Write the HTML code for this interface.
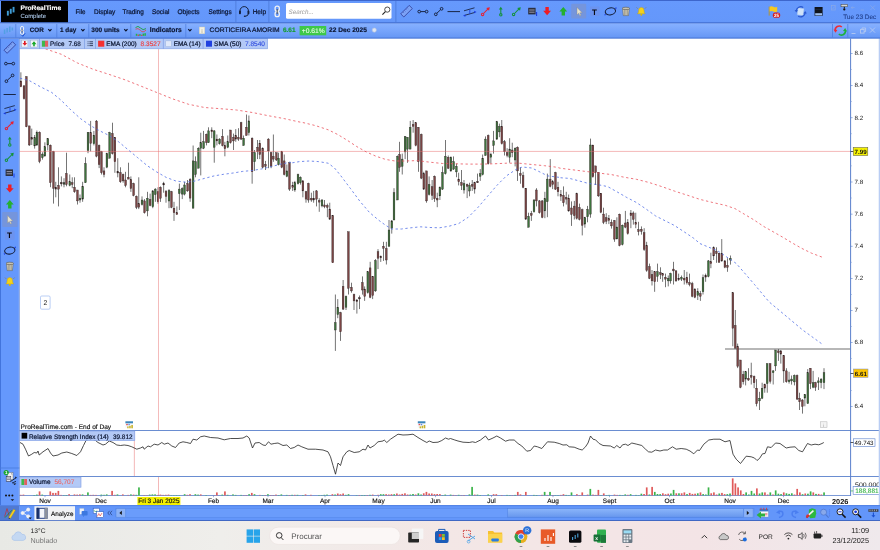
<!DOCTYPE html>
<html lang="en"><head><meta charset="utf-8"><title>ProRealTime - CORTICEIRA AMORIM</title>
<style>
html,body{margin:0;padding:0;background:#fff;overflow:hidden}
svg{display:block;will-change:transform}
text{font-family:"Liberation Sans",sans-serif;text-rendering:geometricPrecision;}
.b{font-weight:bold}
</style></head><body>
<svg width="880" height="550" viewBox="0 0 880 550">
<rect x="0" y="0" width="880" height="550" fill="#fff"/>
<rect x="725" y="348.5" width="125.5" height="1.0" fill="#707070"/>
<rect x="20.56" y="72.3" width="0.7" height="14.9" fill="#3a3a3a"/>
<rect x="20.03" y="81.0" width="1.76" height="5.8" fill="#7b4545" stroke="#2a2020" stroke-width="0.36"/>
<rect x="23.65" y="85.0" width="0.7" height="14.5" fill="#3a3a3a"/>
<rect x="23.12" y="85.9" width="1.76" height="12.7" fill="#7b4545" stroke="#2a2020" stroke-width="0.36"/>
<rect x="26.01" y="76.3" width="0.7" height="50.9" fill="#3a3a3a"/>
<rect x="25.48" y="76.8" width="1.76" height="50.0" fill="#7b4545" stroke="#2a2020" stroke-width="0.36"/>
<rect x="28.92" y="125.9" width="0.7" height="20.0" fill="#3a3a3a"/>
<rect x="28.39" y="125.9" width="1.76" height="19.1" fill="#7b4545" stroke="#2a2020" stroke-width="0.36"/>
<rect x="31.47" y="128.6" width="0.7" height="16.4" fill="#3a3a3a"/>
<rect x="30.94" y="137.7" width="1.76" height="1.5" fill="#4a2c2c" stroke="#2a2020" stroke-width="0.36"/>
<rect x="34.38" y="135.0" width="0.7" height="13.6" fill="#3a3a3a"/>
<rect x="33.85" y="137.7" width="1.76" height="8.2" fill="#3d733d" stroke="#2a2020" stroke-width="0.36"/>
<rect x="36.56" y="130.5" width="0.7" height="15.5" fill="#3a3a3a"/>
<rect x="36.03" y="132.3" width="1.76" height="12.7" fill="#3d733d" stroke="#2a2020" stroke-width="0.36"/>
<rect x="39.29" y="131.4" width="0.7" height="31.8" fill="#3a3a3a"/>
<rect x="38.76" y="132.3" width="1.76" height="29.1" fill="#7b4545" stroke="#2a2020" stroke-width="0.36"/>
<rect x="42.01" y="152.3" width="0.7" height="7.3" fill="#3a3a3a"/>
<rect x="41.48" y="154.1" width="1.76" height="3.6" fill="#3d733d" stroke="#2a2020" stroke-width="0.36"/>
<rect x="44.56" y="142.3" width="0.7" height="14.5" fill="#3a3a3a"/>
<rect x="44.03" y="146.8" width="1.76" height="9.1" fill="#3d733d" stroke="#2a2020" stroke-width="0.36"/>
<rect x="47.47" y="138.6" width="0.7" height="11.8" fill="#3a3a3a"/>
<rect x="46.94" y="138.6" width="1.76" height="6.4" fill="#3d733d" stroke="#2a2020" stroke-width="0.36"/>
<rect x="50.01" y="144.5" width="0.7" height="42.7" fill="#3a3a3a"/>
<rect x="49.48" y="145.2" width="1.76" height="37.5" fill="#7b4545" stroke="#2a2020" stroke-width="0.36"/>
<rect x="53.10" y="150.9" width="0.7" height="52.7" fill="#3a3a3a"/>
<rect x="52.57" y="151.6" width="1.76" height="36.6" fill="#7b4545" stroke="#2a2020" stroke-width="0.36"/>
<rect x="55.47" y="181.8" width="0.7" height="15.5" fill="#3a3a3a"/>
<rect x="54.94" y="187.3" width="1.76" height="1.8" fill="#7b4545" stroke="#2a2020" stroke-width="0.36"/>
<rect x="58.20" y="167.3" width="0.7" height="39.1" fill="#3a3a3a"/>
<rect x="57.67" y="185.5" width="1.76" height="3.6" fill="#7b4545" stroke="#2a2020" stroke-width="0.36"/>
<rect x="60.92" y="176.4" width="0.7" height="10.0" fill="#3a3a3a"/>
<rect x="60.39" y="182.4" width="1.76" height="1.5" fill="#4a2c2c" stroke="#2a2020" stroke-width="0.36"/>
<rect x="63.65" y="178.2" width="0.7" height="9.1" fill="#3a3a3a"/>
<rect x="63.12" y="182.7" width="1.76" height="1.5" fill="#2c4a2c" stroke="#2a2020" stroke-width="0.36"/>
<rect x="66.01" y="152.7" width="0.7" height="33.6" fill="#3a3a3a"/>
<rect x="65.48" y="173.6" width="1.76" height="10.9" fill="#7b4545" stroke="#2a2020" stroke-width="0.36"/>
<rect x="69.47" y="174.5" width="0.7" height="11.8" fill="#3a3a3a"/>
<rect x="68.94" y="181.8" width="1.76" height="3.6" fill="#3d733d" stroke="#2a2020" stroke-width="0.36"/>
<rect x="71.83" y="177.3" width="0.7" height="10.9" fill="#3a3a3a"/>
<rect x="71.30" y="182.7" width="1.76" height="1.8" fill="#7b4545" stroke="#2a2020" stroke-width="0.36"/>
<rect x="74.20" y="177.3" width="0.7" height="15.5" fill="#3a3a3a"/>
<rect x="73.67" y="187.3" width="1.76" height="4.5" fill="#7b4545" stroke="#2a2020" stroke-width="0.36"/>
<rect x="77.10" y="190.0" width="0.7" height="14.5" fill="#3a3a3a"/>
<rect x="76.57" y="190.0" width="1.76" height="10.9" fill="#7b4545" stroke="#2a2020" stroke-width="0.36"/>
<rect x="79.65" y="194.5" width="0.7" height="8.2" fill="#3a3a3a"/>
<rect x="79.12" y="198.2" width="1.76" height="1.8" fill="#3d733d" stroke="#2a2020" stroke-width="0.36"/>
<rect x="82.38" y="181.8" width="0.7" height="20.0" fill="#3a3a3a"/>
<rect x="81.85" y="186.4" width="1.76" height="12.7" fill="#3d733d" stroke="#2a2020" stroke-width="0.36"/>
<rect x="85.10" y="157.3" width="0.7" height="25.5" fill="#3a3a3a"/>
<rect x="84.57" y="163.6" width="1.76" height="19.1" fill="#3d733d" stroke="#2a2020" stroke-width="0.36"/>
<rect x="87.65" y="132.3" width="0.7" height="20.9" fill="#3a3a3a"/>
<rect x="87.12" y="132.3" width="1.76" height="18.2" fill="#3d733d" stroke="#2a2020" stroke-width="0.36"/>
<rect x="90.38" y="120.9" width="0.7" height="30.5" fill="#3a3a3a"/>
<rect x="89.85" y="132.5" width="1.76" height="10.9" fill="#7b4545" stroke="#2a2020" stroke-width="0.36"/>
<rect x="93.56" y="130.9" width="0.7" height="14.5" fill="#3a3a3a"/>
<rect x="93.03" y="135.2" width="1.76" height="8.6" fill="#3d733d" stroke="#2a2020" stroke-width="0.36"/>
<rect x="96.20" y="120.0" width="0.7" height="37.3" fill="#3a3a3a"/>
<rect x="95.67" y="121.1" width="1.76" height="35.0" fill="#7b4545" stroke="#2a2020" stroke-width="0.36"/>
<rect x="98.74" y="144.5" width="0.7" height="23.6" fill="#3a3a3a"/>
<rect x="98.21" y="145.5" width="1.76" height="19.1" fill="#7b4545" stroke="#2a2020" stroke-width="0.36"/>
<rect x="101.10" y="150.9" width="0.7" height="23.6" fill="#3a3a3a"/>
<rect x="100.57" y="151.8" width="1.76" height="20.9" fill="#7b4545" stroke="#2a2020" stroke-width="0.36"/>
<rect x="103.65" y="167.3" width="0.7" height="10.0" fill="#3a3a3a"/>
<rect x="103.12" y="170.9" width="1.76" height="3.6" fill="#7b4545" stroke="#2a2020" stroke-width="0.36"/>
<rect x="106.56" y="152.7" width="0.7" height="15.5" fill="#3a3a3a"/>
<rect x="106.03" y="153.6" width="1.76" height="13.6" fill="#3d733d" stroke="#2a2020" stroke-width="0.36"/>
<rect x="109.29" y="131.8" width="0.7" height="26.4" fill="#3a3a3a"/>
<rect x="108.76" y="132.7" width="1.76" height="25.5" fill="#3d733d" stroke="#2a2020" stroke-width="0.36"/>
<rect x="112.01" y="122.7" width="0.7" height="31.8" fill="#3a3a3a"/>
<rect x="111.48" y="133.6" width="1.76" height="20.0" fill="#7b4545" stroke="#2a2020" stroke-width="0.36"/>
<rect x="114.56" y="137.3" width="0.7" height="35.5" fill="#3a3a3a"/>
<rect x="114.03" y="137.3" width="1.76" height="24.5" fill="#7b4545" stroke="#2a2020" stroke-width="0.36"/>
<rect x="117.47" y="158.2" width="0.7" height="19.1" fill="#3a3a3a"/>
<rect x="116.94" y="171.5" width="1.76" height="1.5" fill="#4a2c2c" stroke="#2a2020" stroke-width="0.36"/>
<rect x="120.01" y="167.3" width="0.7" height="15.5" fill="#3a3a3a"/>
<rect x="119.48" y="172.7" width="1.76" height="9.1" fill="#7b4545" stroke="#2a2020" stroke-width="0.36"/>
<rect x="122.74" y="173.6" width="0.7" height="9.1" fill="#3a3a3a"/>
<rect x="122.21" y="174.5" width="1.76" height="6.4" fill="#7b4545" stroke="#2a2020" stroke-width="0.36"/>
<rect x="125.29" y="171.8" width="0.7" height="15.5" fill="#3a3a3a"/>
<rect x="124.76" y="180.0" width="1.76" height="5.5" fill="#7b4545" stroke="#2a2020" stroke-width="0.36"/>
<rect x="128.01" y="162.7" width="0.7" height="16.4" fill="#3a3a3a"/>
<rect x="127.48" y="177.3" width="1.76" height="1.8" fill="#7b4545" stroke="#2a2020" stroke-width="0.36"/>
<rect x="130.56" y="176.4" width="0.7" height="15.5" fill="#3a3a3a"/>
<rect x="130.03" y="179.5" width="1.76" height="9.1" fill="#7b4545" stroke="#2a2020" stroke-width="0.36"/>
<rect x="133.29" y="182.7" width="0.7" height="13.6" fill="#3a3a3a"/>
<rect x="132.76" y="183.6" width="1.76" height="11.8" fill="#7b4545" stroke="#2a2020" stroke-width="0.36"/>
<rect x="136.10" y="195.5" width="0.7" height="13.6" fill="#3a3a3a"/>
<rect x="135.57" y="196.4" width="1.76" height="10.9" fill="#7b4545" stroke="#2a2020" stroke-width="0.36"/>
<rect x="138.47" y="177.3" width="0.7" height="31.8" fill="#3a3a3a"/>
<rect x="137.94" y="203.6" width="1.76" height="3.6" fill="#7b4545" stroke="#2a2020" stroke-width="0.36"/>
<rect x="141.65" y="196.4" width="0.7" height="9.1" fill="#3a3a3a"/>
<rect x="141.12" y="200.0" width="1.76" height="4.5" fill="#3d733d" stroke="#2a2020" stroke-width="0.36"/>
<rect x="144.20" y="199.1" width="0.7" height="14.5" fill="#3a3a3a"/>
<rect x="143.67" y="200.9" width="1.76" height="11.8" fill="#7b4545" stroke="#2a2020" stroke-width="0.36"/>
<rect x="147.01" y="191.8" width="0.7" height="24.5" fill="#3a3a3a"/>
<rect x="146.48" y="198.2" width="1.76" height="12.7" fill="#3d733d" stroke="#2a2020" stroke-width="0.36"/>
<rect x="149.74" y="193.6" width="0.7" height="12.7" fill="#3a3a3a"/>
<rect x="149.21" y="199.4" width="1.76" height="6.1" fill="#7b4545" stroke="#2a2020" stroke-width="0.36"/>
<rect x="152.47" y="190.0" width="0.7" height="18.2" fill="#3a3a3a"/>
<rect x="151.94" y="190.9" width="1.76" height="15.9" fill="#3d733d" stroke="#2a2020" stroke-width="0.36"/>
<rect x="154.92" y="188.2" width="0.7" height="13.6" fill="#3a3a3a"/>
<rect x="154.39" y="189.1" width="1.76" height="5.5" fill="#3d733d" stroke="#2a2020" stroke-width="0.36"/>
<rect x="157.65" y="187.3" width="0.7" height="16.4" fill="#3a3a3a"/>
<rect x="157.12" y="191.8" width="1.76" height="10.0" fill="#7b4545" stroke="#2a2020" stroke-width="0.36"/>
<rect x="160.10" y="186.4" width="0.7" height="15.5" fill="#3a3a3a"/>
<rect x="159.57" y="187.3" width="1.76" height="10.9" fill="#7b4545" stroke="#2a2020" stroke-width="0.36"/>
<rect x="163.38" y="181.8" width="0.7" height="10.9" fill="#3a3a3a"/>
<rect x="162.85" y="183.6" width="1.76" height="1.3" fill="#4a2c2c" stroke="#2a2020" stroke-width="0.36"/>
<rect x="165.65" y="190.0" width="0.7" height="12.7" fill="#3a3a3a"/>
<rect x="165.12" y="191.4" width="1.76" height="5.0" fill="#7b4545" stroke="#2a2020" stroke-width="0.36"/>
<rect x="168.65" y="189.1" width="0.7" height="19.1" fill="#3a3a3a"/>
<rect x="168.12" y="190.5" width="1.76" height="10.5" fill="#3d733d" stroke="#2a2020" stroke-width="0.36"/>
<rect x="171.10" y="190.9" width="0.7" height="17.3" fill="#3a3a3a"/>
<rect x="170.57" y="191.8" width="1.76" height="15.5" fill="#7b4545" stroke="#2a2020" stroke-width="0.36"/>
<rect x="173.65" y="201.8" width="0.7" height="19.1" fill="#3a3a3a"/>
<rect x="173.12" y="208.2" width="1.76" height="4.5" fill="#7b4545" stroke="#2a2020" stroke-width="0.36"/>
<rect x="176.56" y="206.4" width="0.7" height="8.2" fill="#3a3a3a"/>
<rect x="176.03" y="212.7" width="1.76" height="1.8" fill="#7b4545" stroke="#2a2020" stroke-width="0.36"/>
<rect x="178.92" y="183.6" width="0.7" height="26.4" fill="#3a3a3a"/>
<rect x="178.39" y="189.1" width="1.76" height="4.5" fill="#3d733d" stroke="#2a2020" stroke-width="0.36"/>
<rect x="181.83" y="187.3" width="0.7" height="11.8" fill="#3a3a3a"/>
<rect x="181.30" y="188.6" width="1.76" height="5.5" fill="#3d733d" stroke="#2a2020" stroke-width="0.36"/>
<rect x="184.20" y="181.8" width="0.7" height="13.6" fill="#3a3a3a"/>
<rect x="183.67" y="185.0" width="1.76" height="9.1" fill="#3d733d" stroke="#2a2020" stroke-width="0.36"/>
<rect x="187.29" y="180.0" width="0.7" height="11.8" fill="#3a3a3a"/>
<rect x="186.76" y="183.6" width="1.76" height="7.3" fill="#7b4545" stroke="#2a2020" stroke-width="0.36"/>
<rect x="189.74" y="178.2" width="0.7" height="23.6" fill="#3a3a3a"/>
<rect x="189.21" y="179.5" width="1.76" height="18.6" fill="#7b4545" stroke="#2a2020" stroke-width="0.36"/>
<rect x="192.74" y="145.5" width="0.7" height="62.7" fill="#3a3a3a"/>
<rect x="192.21" y="160.9" width="1.76" height="47.3" fill="#3d733d" stroke="#2a2020" stroke-width="0.36"/>
<rect x="195.20" y="156.4" width="0.7" height="20.9" fill="#3a3a3a"/>
<rect x="194.67" y="161.8" width="1.76" height="12.7" fill="#3d733d" stroke="#2a2020" stroke-width="0.36"/>
<rect x="198.10" y="147.3" width="0.7" height="20.9" fill="#3a3a3a"/>
<rect x="197.57" y="148.2" width="1.76" height="20.0" fill="#3d733d" stroke="#2a2020" stroke-width="0.36"/>
<rect x="200.47" y="132.7" width="0.7" height="42.7" fill="#3a3a3a"/>
<rect x="199.94" y="142.7" width="1.76" height="5.5" fill="#3d733d" stroke="#2a2020" stroke-width="0.36"/>
<rect x="203.29" y="130.9" width="0.7" height="18.2" fill="#3a3a3a"/>
<rect x="202.76" y="141.8" width="1.76" height="6.4" fill="#3d733d" stroke="#2a2020" stroke-width="0.36"/>
<rect x="206.01" y="133.6" width="0.7" height="11.8" fill="#3a3a3a"/>
<rect x="205.48" y="134.5" width="1.76" height="8.2" fill="#7b4545" stroke="#2a2020" stroke-width="0.36"/>
<rect x="208.20" y="127.3" width="0.7" height="15.5" fill="#3a3a3a"/>
<rect x="207.67" y="130.9" width="1.76" height="11.8" fill="#3d733d" stroke="#2a2020" stroke-width="0.36"/>
<rect x="211.47" y="127.3" width="0.7" height="10.9" fill="#3a3a3a"/>
<rect x="210.94" y="130.0" width="1.76" height="1.8" fill="#7b4545" stroke="#2a2020" stroke-width="0.36"/>
<rect x="213.83" y="130.0" width="0.7" height="32.7" fill="#3a3a3a"/>
<rect x="213.30" y="130.9" width="1.76" height="16.4" fill="#3d733d" stroke="#2a2020" stroke-width="0.36"/>
<rect x="216.56" y="134.5" width="0.7" height="10.9" fill="#3a3a3a"/>
<rect x="216.03" y="139.1" width="1.76" height="1.8" fill="#7b4545" stroke="#2a2020" stroke-width="0.36"/>
<rect x="219.29" y="138.2" width="0.7" height="6.4" fill="#3a3a3a"/>
<rect x="218.76" y="139.1" width="1.76" height="4.5" fill="#3d733d" stroke="#2a2020" stroke-width="0.36"/>
<rect x="222.20" y="129.1" width="0.7" height="17.3" fill="#3a3a3a"/>
<rect x="221.67" y="136.4" width="1.76" height="9.1" fill="#7b4545" stroke="#2a2020" stroke-width="0.36"/>
<rect x="224.56" y="141.8" width="0.7" height="14.5" fill="#3a3a3a"/>
<rect x="224.03" y="145.5" width="1.76" height="3.3" fill="#7b4545" stroke="#2a2020" stroke-width="0.36"/>
<rect x="227.47" y="135.5" width="0.7" height="12.7" fill="#3a3a3a"/>
<rect x="226.94" y="141.8" width="1.76" height="5.5" fill="#3d733d" stroke="#2a2020" stroke-width="0.36"/>
<rect x="230.20" y="130.0" width="0.7" height="13.6" fill="#3a3a3a"/>
<rect x="229.67" y="130.0" width="1.76" height="12.7" fill="#7b4545" stroke="#2a2020" stroke-width="0.36"/>
<rect x="233.10" y="133.6" width="0.7" height="16.4" fill="#3a3a3a"/>
<rect x="232.57" y="137.3" width="1.76" height="3.6" fill="#7b4545" stroke="#2a2020" stroke-width="0.36"/>
<rect x="235.47" y="129.1" width="0.7" height="12.7" fill="#3a3a3a"/>
<rect x="234.94" y="135.5" width="1.76" height="3.6" fill="#7b4545" stroke="#2a2020" stroke-width="0.36"/>
<rect x="238.01" y="128.2" width="0.7" height="12.7" fill="#3a3a3a"/>
<rect x="237.48" y="137.3" width="1.76" height="1.8" fill="#7b4545" stroke="#2a2020" stroke-width="0.36"/>
<rect x="240.74" y="121.8" width="0.7" height="18.2" fill="#3a3a3a"/>
<rect x="240.21" y="122.7" width="1.76" height="16.4" fill="#7b4545" stroke="#2a2020" stroke-width="0.36"/>
<rect x="243.29" y="135.5" width="0.7" height="10.0" fill="#3a3a3a"/>
<rect x="242.76" y="138.2" width="1.76" height="7.3" fill="#3d733d" stroke="#2a2020" stroke-width="0.36"/>
<rect x="246.01" y="114.5" width="0.7" height="20.9" fill="#3a3a3a"/>
<rect x="245.48" y="127.3" width="1.76" height="8.2" fill="#7b4545" stroke="#2a2020" stroke-width="0.36"/>
<rect x="248.56" y="115.5" width="0.7" height="20.0" fill="#3a3a3a"/>
<rect x="248.03" y="120.9" width="1.76" height="11.8" fill="#3d733d" stroke="#2a2020" stroke-width="0.36"/>
<rect x="251.74" y="137.3" width="0.7" height="46.4" fill="#3a3a3a"/>
<rect x="251.21" y="138.2" width="1.76" height="33.6" fill="#7b4545" stroke="#2a2020" stroke-width="0.36"/>
<rect x="254.29" y="150.0" width="0.7" height="20.9" fill="#3a3a3a"/>
<rect x="253.76" y="152.7" width="1.76" height="9.1" fill="#3d733d" stroke="#2a2020" stroke-width="0.36"/>
<rect x="257.20" y="140.0" width="0.7" height="19.1" fill="#3a3a3a"/>
<rect x="256.67" y="147.3" width="1.76" height="4.5" fill="#7b4545" stroke="#2a2020" stroke-width="0.36"/>
<rect x="259.47" y="140.0" width="0.7" height="19.1" fill="#3a3a3a"/>
<rect x="258.94" y="143.2" width="1.76" height="11.4" fill="#7b4545" stroke="#2a2020" stroke-width="0.36"/>
<rect x="262.38" y="147.3" width="0.7" height="20.9" fill="#3a3a3a"/>
<rect x="261.85" y="148.2" width="1.76" height="19.1" fill="#7b4545" stroke="#2a2020" stroke-width="0.36"/>
<rect x="265.10" y="160.9" width="0.7" height="9.1" fill="#3a3a3a"/>
<rect x="264.57" y="164.5" width="1.76" height="1.8" fill="#7b4545" stroke="#2a2020" stroke-width="0.36"/>
<rect x="268.01" y="138.2" width="0.7" height="30.0" fill="#3a3a3a"/>
<rect x="267.48" y="139.1" width="1.76" height="11.8" fill="#7b4545" stroke="#2a2020" stroke-width="0.36"/>
<rect x="270.74" y="151.8" width="0.7" height="16.4" fill="#3a3a3a"/>
<rect x="270.21" y="152.7" width="1.76" height="13.6" fill="#7b4545" stroke="#2a2020" stroke-width="0.36"/>
<rect x="272.92" y="134.5" width="0.7" height="27.3" fill="#3a3a3a"/>
<rect x="272.39" y="156.4" width="1.76" height="2.7" fill="#7b4545" stroke="#2a2020" stroke-width="0.36"/>
<rect x="276.01" y="152.7" width="0.7" height="8.2" fill="#3a3a3a"/>
<rect x="275.48" y="152.7" width="1.76" height="7.3" fill="#7b4545" stroke="#2a2020" stroke-width="0.36"/>
<rect x="278.20" y="152.7" width="0.7" height="12.7" fill="#3a3a3a"/>
<rect x="277.67" y="158.2" width="1.76" height="6.4" fill="#3d733d" stroke="#2a2020" stroke-width="0.36"/>
<rect x="281.47" y="150.9" width="0.7" height="17.3" fill="#3a3a3a"/>
<rect x="280.94" y="151.8" width="1.76" height="15.5" fill="#7b4545" stroke="#2a2020" stroke-width="0.36"/>
<rect x="283.83" y="154.5" width="0.7" height="20.9" fill="#3a3a3a"/>
<rect x="283.30" y="160.9" width="1.76" height="13.6" fill="#7b4545" stroke="#2a2020" stroke-width="0.36"/>
<rect x="286.56" y="164.5" width="0.7" height="12.7" fill="#3a3a3a"/>
<rect x="286.03" y="170.9" width="1.76" height="5.5" fill="#3d733d" stroke="#2a2020" stroke-width="0.36"/>
<rect x="289.10" y="161.8" width="0.7" height="29.1" fill="#3a3a3a"/>
<rect x="288.57" y="162.7" width="1.76" height="26.4" fill="#7b4545" stroke="#2a2020" stroke-width="0.36"/>
<rect x="292.38" y="181.8" width="0.7" height="9.1" fill="#3a3a3a"/>
<rect x="291.85" y="185.5" width="1.76" height="1.8" fill="#7b4545" stroke="#2a2020" stroke-width="0.36"/>
<rect x="294.56" y="180.9" width="0.7" height="10.9" fill="#3a3a3a"/>
<rect x="294.03" y="182.7" width="1.76" height="7.3" fill="#3d733d" stroke="#2a2020" stroke-width="0.36"/>
<rect x="297.65" y="173.6" width="0.7" height="10.9" fill="#3a3a3a"/>
<rect x="297.12" y="174.5" width="1.76" height="9.1" fill="#3d733d" stroke="#2a2020" stroke-width="0.36"/>
<rect x="300.01" y="176.4" width="0.7" height="8.2" fill="#3a3a3a"/>
<rect x="299.48" y="177.3" width="1.76" height="5.5" fill="#3d733d" stroke="#2a2020" stroke-width="0.36"/>
<rect x="302.56" y="180.0" width="0.7" height="17.3" fill="#3a3a3a"/>
<rect x="302.03" y="180.9" width="1.76" height="10.0" fill="#7b4545" stroke="#2a2020" stroke-width="0.36"/>
<rect x="305.65" y="190.9" width="0.7" height="11.8" fill="#3a3a3a"/>
<rect x="305.12" y="191.8" width="1.76" height="7.3" fill="#7b4545" stroke="#2a2020" stroke-width="0.36"/>
<rect x="308.01" y="182.7" width="0.7" height="20.0" fill="#3a3a3a"/>
<rect x="307.48" y="183.6" width="1.76" height="16.4" fill="#7b4545" stroke="#2a2020" stroke-width="0.36"/>
<rect x="310.92" y="192.7" width="0.7" height="9.1" fill="#3a3a3a"/>
<rect x="310.39" y="198.2" width="1.76" height="1.8" fill="#7b4545" stroke="#2a2020" stroke-width="0.36"/>
<rect x="313.38" y="190.9" width="0.7" height="11.8" fill="#3a3a3a"/>
<rect x="312.85" y="198.2" width="1.76" height="1.8" fill="#7b4545" stroke="#2a2020" stroke-width="0.36"/>
<rect x="316.20" y="190.0" width="0.7" height="16.4" fill="#3a3a3a"/>
<rect x="315.67" y="190.9" width="1.76" height="8.2" fill="#7b4545" stroke="#2a2020" stroke-width="0.36"/>
<rect x="318.83" y="198.2" width="0.7" height="13.6" fill="#3a3a3a"/>
<rect x="318.30" y="200.5" width="1.76" height="1.6" fill="#7b4545" stroke="#2a2020" stroke-width="0.36"/>
<rect x="321.65" y="199.1" width="0.7" height="8.2" fill="#3a3a3a"/>
<rect x="321.12" y="200.0" width="1.76" height="5.9" fill="#3d733d" stroke="#2a2020" stroke-width="0.36"/>
<rect x="324.20" y="200.0" width="0.7" height="8.2" fill="#3a3a3a"/>
<rect x="323.67" y="205.0" width="1.76" height="1.8" fill="#7b4545" stroke="#2a2020" stroke-width="0.36"/>
<rect x="326.92" y="203.6" width="0.7" height="13.6" fill="#3a3a3a"/>
<rect x="326.39" y="205.5" width="1.76" height="1.8" fill="#7b4545" stroke="#2a2020" stroke-width="0.36"/>
<rect x="329.47" y="202.7" width="0.7" height="17.3" fill="#3a3a3a"/>
<rect x="328.94" y="209.1" width="1.76" height="10.0" fill="#7b4545" stroke="#2a2020" stroke-width="0.36"/>
<rect x="332.38" y="215.5" width="0.7" height="47.3" fill="#3a3a3a"/>
<rect x="331.85" y="215.5" width="1.76" height="47.3" fill="#7b4545" stroke="#2a2020" stroke-width="0.36"/>
<rect x="334.92" y="294.5" width="0.7" height="56.4" fill="#3a3a3a"/>
<rect x="334.39" y="322.7" width="1.76" height="7.3" fill="#3d733d" stroke="#2a2020" stroke-width="0.36"/>
<rect x="337.47" y="299.1" width="0.7" height="19.1" fill="#3a3a3a"/>
<rect x="336.94" y="307.3" width="1.76" height="7.3" fill="#3d733d" stroke="#2a2020" stroke-width="0.36"/>
<rect x="340.20" y="311.8" width="0.7" height="29.1" fill="#3a3a3a"/>
<rect x="339.67" y="312.7" width="1.76" height="19.1" fill="#7b4545" stroke="#2a2020" stroke-width="0.36"/>
<rect x="342.74" y="280.0" width="0.7" height="30.0" fill="#3a3a3a"/>
<rect x="342.21" y="286.4" width="1.76" height="22.7" fill="#7b4545" stroke="#2a2020" stroke-width="0.36"/>
<rect x="345.65" y="295.5" width="0.7" height="14.5" fill="#3a3a3a"/>
<rect x="345.12" y="296.4" width="1.76" height="10.9" fill="#3d733d" stroke="#2a2020" stroke-width="0.36"/>
<rect x="348.01" y="231.8" width="0.7" height="62.7" fill="#3a3a3a"/>
<rect x="347.48" y="231.8" width="1.76" height="56.4" fill="#7b4545" stroke="#2a2020" stroke-width="0.36"/>
<rect x="351.10" y="282.7" width="0.7" height="10.0" fill="#3a3a3a"/>
<rect x="350.57" y="287.3" width="1.76" height="3.6" fill="#7b4545" stroke="#2a2020" stroke-width="0.36"/>
<rect x="353.65" y="293.6" width="0.7" height="16.4" fill="#3a3a3a"/>
<rect x="353.12" y="294.5" width="1.76" height="6.4" fill="#7b4545" stroke="#2a2020" stroke-width="0.36"/>
<rect x="356.56" y="299.1" width="0.7" height="14.5" fill="#3a3a3a"/>
<rect x="356.03" y="300.0" width="1.76" height="1.5" fill="#4a2c2c" stroke="#2a2020" stroke-width="0.36"/>
<rect x="359.10" y="295.5" width="0.7" height="13.6" fill="#3a3a3a"/>
<rect x="358.57" y="297.8" width="1.76" height="1.1" fill="#4a2c2c" stroke="#2a2020" stroke-width="0.36"/>
<rect x="362.01" y="276.4" width="0.7" height="18.2" fill="#3a3a3a"/>
<rect x="361.48" y="282.7" width="1.76" height="7.3" fill="#7b4545" stroke="#2a2020" stroke-width="0.36"/>
<rect x="364.38" y="286.4" width="0.7" height="14.5" fill="#3a3a3a"/>
<rect x="363.85" y="289.1" width="1.76" height="7.3" fill="#7b4545" stroke="#2a2020" stroke-width="0.36"/>
<rect x="367.47" y="271.8" width="0.7" height="21.8" fill="#3a3a3a"/>
<rect x="366.94" y="271.8" width="1.76" height="20.9" fill="#3d733d" stroke="#2a2020" stroke-width="0.36"/>
<rect x="369.77" y="261.8" width="0.7" height="36.4" fill="#3a3a3a"/>
<rect x="369.24" y="267.9" width="1.76" height="29.4" fill="#7b4545" stroke="#2a2020" stroke-width="0.36"/>
<rect x="372.38" y="276.4" width="0.7" height="22.7" fill="#3a3a3a"/>
<rect x="371.85" y="276.4" width="1.76" height="19.1" fill="#7b4545" stroke="#2a2020" stroke-width="0.36"/>
<rect x="375.10" y="259.1" width="0.7" height="32.7" fill="#3a3a3a"/>
<rect x="374.57" y="260.6" width="1.76" height="30.3" fill="#3d733d" stroke="#2a2020" stroke-width="0.36"/>
<rect x="377.65" y="249.1" width="0.7" height="20.0" fill="#3a3a3a"/>
<rect x="377.12" y="251.8" width="1.76" height="6.4" fill="#7b4545" stroke="#2a2020" stroke-width="0.36"/>
<rect x="380.47" y="255.5" width="0.7" height="6.4" fill="#3a3a3a"/>
<rect x="379.94" y="256.4" width="1.76" height="1.4" fill="#4a2c2c" stroke="#2a2020" stroke-width="0.36"/>
<rect x="383.10" y="241.8" width="0.7" height="19.1" fill="#3a3a3a"/>
<rect x="382.57" y="246.4" width="1.76" height="1.8" fill="#7b4545" stroke="#2a2020" stroke-width="0.36"/>
<rect x="385.92" y="241.8" width="0.7" height="22.7" fill="#3a3a3a"/>
<rect x="385.39" y="248.6" width="1.76" height="11.4" fill="#7b4545" stroke="#2a2020" stroke-width="0.36"/>
<rect x="388.65" y="220.0" width="0.7" height="26.4" fill="#3a3a3a"/>
<rect x="388.12" y="230.0" width="1.76" height="16.4" fill="#3d733d" stroke="#2a2020" stroke-width="0.36"/>
<rect x="391.47" y="220.0" width="0.7" height="13.6" fill="#3a3a3a"/>
<rect x="390.94" y="220.9" width="1.76" height="7.3" fill="#3d733d" stroke="#2a2020" stroke-width="0.36"/>
<rect x="393.65" y="188.2" width="0.7" height="31.8" fill="#3a3a3a"/>
<rect x="393.12" y="192.7" width="1.76" height="27.3" fill="#3d733d" stroke="#2a2020" stroke-width="0.36"/>
<rect x="397.10" y="155.5" width="0.7" height="44.5" fill="#3a3a3a"/>
<rect x="396.57" y="156.4" width="1.76" height="43.6" fill="#3d733d" stroke="#2a2020" stroke-width="0.36"/>
<rect x="399.29" y="141.8" width="0.7" height="30.0" fill="#3a3a3a"/>
<rect x="398.76" y="154.5" width="1.76" height="12.7" fill="#7b4545" stroke="#2a2020" stroke-width="0.36"/>
<rect x="401.83" y="153.6" width="0.7" height="20.9" fill="#3a3a3a"/>
<rect x="401.30" y="159.1" width="1.76" height="7.3" fill="#3d733d" stroke="#2a2020" stroke-width="0.36"/>
<rect x="404.74" y="136.4" width="0.7" height="22.7" fill="#3a3a3a"/>
<rect x="404.21" y="136.4" width="1.76" height="15.5" fill="#3d733d" stroke="#2a2020" stroke-width="0.36"/>
<rect x="407.10" y="137.3" width="0.7" height="25.5" fill="#3a3a3a"/>
<rect x="406.57" y="137.3" width="1.76" height="11.8" fill="#3d733d" stroke="#2a2020" stroke-width="0.36"/>
<rect x="409.83" y="120.9" width="0.7" height="28.2" fill="#3a3a3a"/>
<rect x="409.30" y="127.3" width="1.76" height="21.8" fill="#3d733d" stroke="#2a2020" stroke-width="0.36"/>
<rect x="412.74" y="120.0" width="0.7" height="12.7" fill="#3a3a3a"/>
<rect x="412.21" y="124.5" width="1.76" height="1.8" fill="#7b4545" stroke="#2a2020" stroke-width="0.36"/>
<rect x="415.47" y="122.7" width="0.7" height="23.6" fill="#3a3a3a"/>
<rect x="414.94" y="122.7" width="1.76" height="22.7" fill="#7b4545" stroke="#2a2020" stroke-width="0.36"/>
<rect x="418.01" y="127.3" width="0.7" height="44.5" fill="#3a3a3a"/>
<rect x="417.48" y="127.3" width="1.76" height="34.5" fill="#7b4545" stroke="#2a2020" stroke-width="0.36"/>
<rect x="420.92" y="133.6" width="0.7" height="45.5" fill="#3a3a3a"/>
<rect x="420.39" y="134.5" width="1.76" height="43.6" fill="#7b4545" stroke="#2a2020" stroke-width="0.36"/>
<rect x="423.47" y="171.8" width="0.7" height="18.2" fill="#3a3a3a"/>
<rect x="422.94" y="173.6" width="1.76" height="15.5" fill="#7b4545" stroke="#2a2020" stroke-width="0.36"/>
<rect x="426.20" y="170.9" width="0.7" height="31.8" fill="#3a3a3a"/>
<rect x="425.67" y="170.9" width="1.76" height="30.0" fill="#7b4545" stroke="#2a2020" stroke-width="0.36"/>
<rect x="428.74" y="176.4" width="0.7" height="19.1" fill="#3a3a3a"/>
<rect x="428.21" y="184.5" width="1.76" height="10.0" fill="#3d733d" stroke="#2a2020" stroke-width="0.36"/>
<rect x="431.74" y="180.0" width="0.7" height="20.0" fill="#3a3a3a"/>
<rect x="431.21" y="186.8" width="1.76" height="8.6" fill="#7b4545" stroke="#2a2020" stroke-width="0.36"/>
<rect x="434.29" y="175.5" width="0.7" height="26.4" fill="#3a3a3a"/>
<rect x="433.76" y="176.4" width="1.76" height="22.3" fill="#7b4545" stroke="#2a2020" stroke-width="0.36"/>
<rect x="436.83" y="192.7" width="0.7" height="14.5" fill="#3a3a3a"/>
<rect x="436.30" y="198.2" width="1.76" height="1.8" fill="#7b4545" stroke="#2a2020" stroke-width="0.36"/>
<rect x="439.56" y="186.4" width="0.7" height="13.6" fill="#3a3a3a"/>
<rect x="439.03" y="187.3" width="1.76" height="8.6" fill="#3d733d" stroke="#2a2020" stroke-width="0.36"/>
<rect x="442.10" y="166.4" width="0.7" height="23.6" fill="#3a3a3a"/>
<rect x="441.57" y="172.7" width="1.76" height="16.4" fill="#3d733d" stroke="#2a2020" stroke-width="0.36"/>
<rect x="445.01" y="140.0" width="0.7" height="34.5" fill="#3a3a3a"/>
<rect x="444.48" y="156.4" width="1.76" height="17.3" fill="#3d733d" stroke="#2a2020" stroke-width="0.36"/>
<rect x="447.83" y="155.5" width="0.7" height="13.6" fill="#3a3a3a"/>
<rect x="447.30" y="157.3" width="1.76" height="10.9" fill="#7b4545" stroke="#2a2020" stroke-width="0.36"/>
<rect x="450.56" y="156.4" width="0.7" height="15.5" fill="#3a3a3a"/>
<rect x="450.03" y="157.3" width="1.76" height="13.6" fill="#3d733d" stroke="#2a2020" stroke-width="0.36"/>
<rect x="453.29" y="156.4" width="0.7" height="13.6" fill="#3a3a3a"/>
<rect x="452.76" y="161.8" width="1.76" height="7.3" fill="#3d733d" stroke="#2a2020" stroke-width="0.36"/>
<rect x="456.01" y="163.6" width="0.7" height="13.6" fill="#3a3a3a"/>
<rect x="455.48" y="166.4" width="1.76" height="5.5" fill="#3d733d" stroke="#2a2020" stroke-width="0.36"/>
<rect x="458.38" y="172.7" width="0.7" height="12.7" fill="#3a3a3a"/>
<rect x="457.85" y="179.1" width="1.76" height="2.7" fill="#7b4545" stroke="#2a2020" stroke-width="0.36"/>
<rect x="461.10" y="170.0" width="0.7" height="20.0" fill="#3a3a3a"/>
<rect x="460.57" y="182.7" width="1.76" height="2.7" fill="#7b4545" stroke="#2a2020" stroke-width="0.36"/>
<rect x="463.65" y="180.0" width="0.7" height="13.6" fill="#3a3a3a"/>
<rect x="463.12" y="183.6" width="1.76" height="6.4" fill="#3d733d" stroke="#2a2020" stroke-width="0.36"/>
<rect x="466.74" y="183.6" width="0.7" height="14.5" fill="#3a3a3a"/>
<rect x="466.21" y="184.5" width="1.76" height="1.8" fill="#7b4545" stroke="#2a2020" stroke-width="0.36"/>
<rect x="469.10" y="182.7" width="0.7" height="13.6" fill="#3a3a3a"/>
<rect x="468.57" y="185.5" width="1.76" height="5.5" fill="#3d733d" stroke="#2a2020" stroke-width="0.36"/>
<rect x="471.83" y="180.0" width="0.7" height="10.9" fill="#3a3a3a"/>
<rect x="471.30" y="184.5" width="1.76" height="1.8" fill="#7b4545" stroke="#2a2020" stroke-width="0.36"/>
<rect x="474.38" y="181.8" width="0.7" height="11.8" fill="#3a3a3a"/>
<rect x="473.85" y="182.7" width="1.76" height="6.4" fill="#7b4545" stroke="#2a2020" stroke-width="0.36"/>
<rect x="477.29" y="173.6" width="0.7" height="9.1" fill="#3a3a3a"/>
<rect x="476.76" y="181.5" width="1.76" height="1.3" fill="#4a2c2c" stroke="#2a2020" stroke-width="0.36"/>
<rect x="479.83" y="169.1" width="0.7" height="11.8" fill="#3a3a3a"/>
<rect x="479.30" y="173.6" width="1.76" height="2.7" fill="#3d733d" stroke="#2a2020" stroke-width="0.36"/>
<rect x="482.38" y="154.5" width="0.7" height="20.9" fill="#3a3a3a"/>
<rect x="481.85" y="158.2" width="1.76" height="16.4" fill="#3d733d" stroke="#2a2020" stroke-width="0.36"/>
<rect x="485.10" y="136.4" width="0.7" height="19.1" fill="#3a3a3a"/>
<rect x="484.57" y="139.1" width="1.76" height="16.4" fill="#3d733d" stroke="#2a2020" stroke-width="0.36"/>
<rect x="487.83" y="134.5" width="0.7" height="30.0" fill="#3a3a3a"/>
<rect x="487.30" y="135.5" width="1.76" height="28.2" fill="#7b4545" stroke="#2a2020" stroke-width="0.36"/>
<rect x="490.56" y="152.7" width="0.7" height="10.9" fill="#3a3a3a"/>
<rect x="490.03" y="154.5" width="1.76" height="2.7" fill="#3d733d" stroke="#2a2020" stroke-width="0.36"/>
<rect x="493.29" y="130.9" width="0.7" height="22.7" fill="#3a3a3a"/>
<rect x="492.76" y="140.9" width="1.76" height="4.5" fill="#3d733d" stroke="#2a2020" stroke-width="0.36"/>
<rect x="496.56" y="120.9" width="0.7" height="19.1" fill="#3a3a3a"/>
<rect x="496.03" y="121.8" width="1.76" height="17.3" fill="#3d733d" stroke="#2a2020" stroke-width="0.36"/>
<rect x="498.92" y="123.6" width="0.7" height="13.6" fill="#3a3a3a"/>
<rect x="498.39" y="126.4" width="1.76" height="5.5" fill="#3d733d" stroke="#2a2020" stroke-width="0.36"/>
<rect x="501.47" y="120.0" width="0.7" height="24.5" fill="#3a3a3a"/>
<rect x="500.94" y="126.4" width="1.76" height="17.3" fill="#7b4545" stroke="#2a2020" stroke-width="0.36"/>
<rect x="504.20" y="140.0" width="0.7" height="15.5" fill="#3a3a3a"/>
<rect x="503.67" y="141.8" width="1.76" height="10.0" fill="#7b4545" stroke="#2a2020" stroke-width="0.36"/>
<rect x="506.74" y="148.2" width="0.7" height="9.1" fill="#3a3a3a"/>
<rect x="506.21" y="152.7" width="1.76" height="2.7" fill="#7b4545" stroke="#2a2020" stroke-width="0.36"/>
<rect x="509.38" y="138.2" width="0.7" height="24.5" fill="#3a3a3a"/>
<rect x="508.85" y="149.1" width="1.76" height="8.2" fill="#3d733d" stroke="#2a2020" stroke-width="0.36"/>
<rect x="511.83" y="142.7" width="0.7" height="14.5" fill="#3a3a3a"/>
<rect x="511.30" y="150.0" width="1.76" height="2.7" fill="#7b4545" stroke="#2a2020" stroke-width="0.36"/>
<rect x="514.74" y="147.3" width="0.7" height="19.1" fill="#3a3a3a"/>
<rect x="514.21" y="148.2" width="1.76" height="11.8" fill="#3d733d" stroke="#2a2020" stroke-width="0.36"/>
<rect x="517.29" y="146.4" width="0.7" height="34.5" fill="#3a3a3a"/>
<rect x="516.76" y="147.3" width="1.76" height="23.6" fill="#7b4545" stroke="#2a2020" stroke-width="0.36"/>
<rect x="520.01" y="167.3" width="0.7" height="16.4" fill="#3a3a3a"/>
<rect x="519.48" y="173.6" width="1.76" height="1.8" fill="#7b4545" stroke="#2a2020" stroke-width="0.36"/>
<rect x="522.74" y="171.8" width="0.7" height="16.4" fill="#3a3a3a"/>
<rect x="522.21" y="175.5" width="1.76" height="11.8" fill="#7b4545" stroke="#2a2020" stroke-width="0.36"/>
<rect x="525.47" y="188.2" width="0.7" height="31.8" fill="#3a3a3a"/>
<rect x="524.94" y="188.2" width="1.76" height="30.9" fill="#7b4545" stroke="#2a2020" stroke-width="0.36"/>
<rect x="528.20" y="212.7" width="0.7" height="14.5" fill="#3a3a3a"/>
<rect x="527.67" y="216.4" width="1.76" height="10.9" fill="#3d733d" stroke="#2a2020" stroke-width="0.36"/>
<rect x="530.92" y="210.9" width="0.7" height="10.0" fill="#3a3a3a"/>
<rect x="530.39" y="213.6" width="1.76" height="1.8" fill="#7b4545" stroke="#2a2020" stroke-width="0.36"/>
<rect x="533.65" y="199.1" width="0.7" height="13.6" fill="#3a3a3a"/>
<rect x="533.12" y="200.0" width="1.76" height="11.8" fill="#3d733d" stroke="#2a2020" stroke-width="0.36"/>
<rect x="536.01" y="188.2" width="0.7" height="18.2" fill="#3a3a3a"/>
<rect x="535.48" y="190.0" width="1.76" height="10.9" fill="#7b4545" stroke="#2a2020" stroke-width="0.36"/>
<rect x="539.10" y="200.0" width="0.7" height="13.6" fill="#3a3a3a"/>
<rect x="538.57" y="200.9" width="1.76" height="11.8" fill="#7b4545" stroke="#2a2020" stroke-width="0.36"/>
<rect x="541.83" y="200.0" width="0.7" height="18.2" fill="#3a3a3a"/>
<rect x="541.30" y="200.9" width="1.76" height="16.4" fill="#7b4545" stroke="#2a2020" stroke-width="0.36"/>
<rect x="544.56" y="191.8" width="0.7" height="26.4" fill="#3a3a3a"/>
<rect x="544.03" y="198.6" width="1.76" height="12.3" fill="#3d733d" stroke="#2a2020" stroke-width="0.36"/>
<rect x="546.92" y="173.6" width="0.7" height="43.6" fill="#3a3a3a"/>
<rect x="546.39" y="179.1" width="1.76" height="22.7" fill="#3d733d" stroke="#2a2020" stroke-width="0.36"/>
<rect x="549.83" y="159.1" width="0.7" height="28.2" fill="#3a3a3a"/>
<rect x="549.30" y="179.1" width="1.76" height="7.3" fill="#7b4545" stroke="#2a2020" stroke-width="0.36"/>
<rect x="552.38" y="180.0" width="0.7" height="9.1" fill="#3a3a3a"/>
<rect x="551.85" y="181.8" width="1.76" height="2.7" fill="#7b4545" stroke="#2a2020" stroke-width="0.36"/>
<rect x="555.10" y="171.8" width="0.7" height="18.2" fill="#3a3a3a"/>
<rect x="554.57" y="172.7" width="1.76" height="16.4" fill="#7b4545" stroke="#2a2020" stroke-width="0.36"/>
<rect x="557.65" y="181.8" width="0.7" height="14.5" fill="#3a3a3a"/>
<rect x="557.12" y="187.3" width="1.76" height="4.5" fill="#7b4545" stroke="#2a2020" stroke-width="0.36"/>
<rect x="560.56" y="190.0" width="0.7" height="10.9" fill="#3a3a3a"/>
<rect x="560.03" y="194.5" width="1.76" height="1.8" fill="#7b4545" stroke="#2a2020" stroke-width="0.36"/>
<rect x="563.10" y="186.4" width="0.7" height="20.0" fill="#3a3a3a"/>
<rect x="562.57" y="195.5" width="1.76" height="7.3" fill="#7b4545" stroke="#2a2020" stroke-width="0.36"/>
<rect x="565.83" y="191.8" width="0.7" height="12.7" fill="#3a3a3a"/>
<rect x="565.30" y="197.3" width="1.76" height="1.8" fill="#7b4545" stroke="#2a2020" stroke-width="0.36"/>
<rect x="568.38" y="194.5" width="0.7" height="17.3" fill="#3a3a3a"/>
<rect x="567.85" y="198.2" width="1.76" height="12.7" fill="#7b4545" stroke="#2a2020" stroke-width="0.36"/>
<rect x="571.10" y="201.4" width="0.7" height="24.5" fill="#3a3a3a"/>
<rect x="570.57" y="208.0" width="1.76" height="6.3" fill="#7b4545" stroke="#2a2020" stroke-width="0.36"/>
<rect x="573.89" y="200.9" width="0.7" height="18.6" fill="#3a3a3a"/>
<rect x="573.36" y="206.1" width="1.76" height="9.5" fill="#7b4545" stroke="#2a2020" stroke-width="0.36"/>
<rect x="576.44" y="192.7" width="0.7" height="26.8" fill="#3a3a3a"/>
<rect x="575.91" y="193.5" width="1.76" height="24.9" fill="#7b4545" stroke="#2a2020" stroke-width="0.36"/>
<rect x="579.10" y="203.6" width="0.7" height="16.8" fill="#3a3a3a"/>
<rect x="578.57" y="207.7" width="1.76" height="11.6" fill="#7b4545" stroke="#2a2020" stroke-width="0.36"/>
<rect x="581.83" y="208.6" width="0.7" height="26.8" fill="#3a3a3a"/>
<rect x="581.30" y="209.8" width="1.76" height="15.5" fill="#7b4545" stroke="#2a2020" stroke-width="0.36"/>
<rect x="584.56" y="216.8" width="0.7" height="10.9" fill="#3a3a3a"/>
<rect x="584.03" y="217.7" width="1.76" height="6.4" fill="#3d733d" stroke="#2a2020" stroke-width="0.36"/>
<rect x="587.29" y="205.9" width="0.7" height="16.4" fill="#3a3a3a"/>
<rect x="586.76" y="209.5" width="1.76" height="7.3" fill="#3d733d" stroke="#2a2020" stroke-width="0.36"/>
<rect x="590.01" y="138.6" width="0.7" height="79.1" fill="#3a3a3a"/>
<rect x="589.48" y="145.0" width="1.76" height="69.1" fill="#3d733d" stroke="#2a2020" stroke-width="0.36"/>
<rect x="592.56" y="145.0" width="0.7" height="32.7" fill="#3a3a3a"/>
<rect x="592.03" y="145.0" width="1.76" height="31.8" fill="#7b4545" stroke="#2a2020" stroke-width="0.36"/>
<rect x="595.29" y="165.9" width="0.7" height="19.1" fill="#3a3a3a"/>
<rect x="594.76" y="165.9" width="1.76" height="6.4" fill="#7b4545" stroke="#2a2020" stroke-width="0.36"/>
<rect x="598.01" y="172.3" width="0.7" height="24.5" fill="#3a3a3a"/>
<rect x="597.48" y="172.3" width="1.76" height="23.6" fill="#7b4545" stroke="#2a2020" stroke-width="0.36"/>
<rect x="600.56" y="193.2" width="0.7" height="20.0" fill="#3a3a3a"/>
<rect x="600.03" y="193.2" width="1.76" height="19.1" fill="#7b4545" stroke="#2a2020" stroke-width="0.36"/>
<rect x="603.29" y="207.7" width="0.7" height="16.4" fill="#3a3a3a"/>
<rect x="602.76" y="214.1" width="1.76" height="8.2" fill="#7b4545" stroke="#2a2020" stroke-width="0.36"/>
<rect x="605.83" y="213.2" width="0.7" height="10.9" fill="#3a3a3a"/>
<rect x="605.30" y="217.7" width="1.76" height="3.6" fill="#7b4545" stroke="#2a2020" stroke-width="0.36"/>
<rect x="608.56" y="215.0" width="0.7" height="9.1" fill="#3a3a3a"/>
<rect x="608.03" y="218.6" width="1.76" height="1.8" fill="#7b4545" stroke="#2a2020" stroke-width="0.36"/>
<rect x="611.10" y="219.5" width="0.7" height="9.1" fill="#3a3a3a"/>
<rect x="610.57" y="222.3" width="1.76" height="3.6" fill="#7b4545" stroke="#2a2020" stroke-width="0.36"/>
<rect x="614.01" y="220.0" width="0.7" height="21.8" fill="#3a3a3a"/>
<rect x="613.48" y="220.7" width="1.76" height="18.4" fill="#7b4545" stroke="#2a2020" stroke-width="0.36"/>
<rect x="616.56" y="217.3" width="0.7" height="21.8" fill="#3a3a3a"/>
<rect x="616.03" y="227.0" width="1.76" height="12.0" fill="#3d733d" stroke="#2a2020" stroke-width="0.36"/>
<rect x="619.29" y="213.6" width="0.7" height="32.7" fill="#3a3a3a"/>
<rect x="618.76" y="214.3" width="1.76" height="31.1" fill="#7b4545" stroke="#2a2020" stroke-width="0.36"/>
<rect x="622.01" y="224.5" width="0.7" height="20.9" fill="#3a3a3a"/>
<rect x="621.48" y="225.2" width="1.76" height="19.3" fill="#3d733d" stroke="#2a2020" stroke-width="0.36"/>
<rect x="624.92" y="210.9" width="0.7" height="17.3" fill="#3a3a3a"/>
<rect x="624.39" y="223.0" width="1.76" height="4.1" fill="#7b4545" stroke="#2a2020" stroke-width="0.36"/>
<rect x="627.47" y="219.1" width="0.7" height="15.5" fill="#3a3a3a"/>
<rect x="626.94" y="222.5" width="1.76" height="11.1" fill="#7b4545" stroke="#2a2020" stroke-width="0.36"/>
<rect x="630.56" y="210.0" width="0.7" height="18.2" fill="#3a3a3a"/>
<rect x="630.03" y="213.0" width="1.76" height="2.7" fill="#7b4545" stroke="#2a2020" stroke-width="0.36"/>
<rect x="632.92" y="211.4" width="0.7" height="13.2" fill="#3a3a3a"/>
<rect x="632.39" y="213.0" width="1.76" height="6.4" fill="#7b4545" stroke="#2a2020" stroke-width="0.36"/>
<rect x="635.47" y="212.7" width="0.7" height="15.5" fill="#3a3a3a"/>
<rect x="634.94" y="222.5" width="1.76" height="1.8" fill="#7b4545" stroke="#2a2020" stroke-width="0.36"/>
<rect x="638.20" y="221.8" width="0.7" height="13.6" fill="#3a3a3a"/>
<rect x="637.67" y="229.8" width="1.76" height="1.8" fill="#7b4545" stroke="#2a2020" stroke-width="0.36"/>
<rect x="640.98" y="226.4" width="0.7" height="8.2" fill="#3a3a3a"/>
<rect x="640.45" y="229.2" width="1.76" height="2.1" fill="#7b4545" stroke="#2a2020" stroke-width="0.36"/>
<rect x="643.77" y="228.2" width="0.7" height="22.7" fill="#3a3a3a"/>
<rect x="643.24" y="232.7" width="1.76" height="16.8" fill="#7b4545" stroke="#2a2020" stroke-width="0.36"/>
<rect x="646.38" y="241.8" width="0.7" height="30.0" fill="#3a3a3a"/>
<rect x="645.85" y="245.5" width="1.76" height="25.0" fill="#7b4545" stroke="#2a2020" stroke-width="0.36"/>
<rect x="649.01" y="263.6" width="0.7" height="15.5" fill="#3a3a3a"/>
<rect x="648.48" y="266.8" width="1.76" height="11.4" fill="#7b4545" stroke="#2a2020" stroke-width="0.36"/>
<rect x="651.65" y="270.0" width="0.7" height="15.5" fill="#3a3a3a"/>
<rect x="651.12" y="274.5" width="1.76" height="6.4" fill="#7b4545" stroke="#2a2020" stroke-width="0.36"/>
<rect x="654.38" y="271.8" width="0.7" height="20.0" fill="#3a3a3a"/>
<rect x="653.85" y="271.8" width="1.76" height="10.0" fill="#7b4545" stroke="#2a2020" stroke-width="0.36"/>
<rect x="657.10" y="263.6" width="0.7" height="18.2" fill="#3a3a3a"/>
<rect x="656.57" y="271.8" width="1.76" height="4.5" fill="#3d733d" stroke="#2a2020" stroke-width="0.36"/>
<rect x="660.01" y="267.3" width="0.7" height="11.8" fill="#3a3a3a"/>
<rect x="659.48" y="272.7" width="1.76" height="1.8" fill="#7b4545" stroke="#2a2020" stroke-width="0.36"/>
<rect x="662.38" y="273.6" width="0.7" height="8.2" fill="#3a3a3a"/>
<rect x="661.85" y="273.6" width="1.76" height="1.8" fill="#7b4545" stroke="#2a2020" stroke-width="0.36"/>
<rect x="665.10" y="273.6" width="0.7" height="13.6" fill="#3a3a3a"/>
<rect x="664.57" y="277.3" width="1.76" height="1.8" fill="#7b4545" stroke="#2a2020" stroke-width="0.36"/>
<rect x="667.83" y="275.5" width="0.7" height="10.9" fill="#3a3a3a"/>
<rect x="667.30" y="278.2" width="1.76" height="2.7" fill="#3d733d" stroke="#2a2020" stroke-width="0.36"/>
<rect x="670.20" y="272.7" width="0.7" height="10.9" fill="#3a3a3a"/>
<rect x="669.67" y="273.6" width="1.76" height="7.3" fill="#3d733d" stroke="#2a2020" stroke-width="0.36"/>
<rect x="673.10" y="261.8" width="0.7" height="22.7" fill="#3a3a3a"/>
<rect x="672.57" y="269.1" width="1.76" height="1.8" fill="#7b4545" stroke="#2a2020" stroke-width="0.36"/>
<rect x="675.65" y="270.0" width="0.7" height="11.8" fill="#3a3a3a"/>
<rect x="675.12" y="270.9" width="1.76" height="10.0" fill="#7b4545" stroke="#2a2020" stroke-width="0.36"/>
<rect x="678.38" y="273.6" width="0.7" height="7.3" fill="#3a3a3a"/>
<rect x="677.85" y="278.2" width="1.76" height="1.5" fill="#4a2c2c" stroke="#2a2020" stroke-width="0.36"/>
<rect x="681.10" y="275.5" width="0.7" height="5.5" fill="#3a3a3a"/>
<rect x="680.57" y="277.3" width="1.76" height="1.8" fill="#3d733d" stroke="#2a2020" stroke-width="0.36"/>
<rect x="683.83" y="270.0" width="0.7" height="14.5" fill="#3a3a3a"/>
<rect x="683.30" y="278.2" width="1.76" height="1.8" fill="#7b4545" stroke="#2a2020" stroke-width="0.36"/>
<rect x="686.56" y="271.8" width="0.7" height="12.7" fill="#3a3a3a"/>
<rect x="686.03" y="277.3" width="1.76" height="5.5" fill="#7b4545" stroke="#2a2020" stroke-width="0.36"/>
<rect x="689.10" y="273.6" width="0.7" height="12.7" fill="#3a3a3a"/>
<rect x="688.57" y="282.7" width="1.76" height="1.8" fill="#7b4545" stroke="#2a2020" stroke-width="0.36"/>
<rect x="691.83" y="281.8" width="0.7" height="15.5" fill="#3a3a3a"/>
<rect x="691.30" y="283.6" width="1.76" height="12.7" fill="#7b4545" stroke="#2a2020" stroke-width="0.36"/>
<rect x="694.56" y="288.2" width="0.7" height="10.0" fill="#3a3a3a"/>
<rect x="694.03" y="289.1" width="1.76" height="8.2" fill="#7b4545" stroke="#2a2020" stroke-width="0.36"/>
<rect x="697.47" y="288.2" width="0.7" height="11.8" fill="#3a3a3a"/>
<rect x="696.94" y="291.8" width="1.76" height="3.6" fill="#3d733d" stroke="#2a2020" stroke-width="0.36"/>
<rect x="699.92" y="290.9" width="0.7" height="10.0" fill="#3a3a3a"/>
<rect x="699.39" y="293.6" width="1.76" height="2.7" fill="#7b4545" stroke="#2a2020" stroke-width="0.36"/>
<rect x="702.65" y="274.5" width="0.7" height="20.0" fill="#3a3a3a"/>
<rect x="702.12" y="277.7" width="1.76" height="14.1" fill="#3d733d" stroke="#2a2020" stroke-width="0.36"/>
<rect x="705.38" y="273.6" width="0.7" height="8.2" fill="#3a3a3a"/>
<rect x="704.85" y="275.5" width="1.76" height="1.6" fill="#7b4545" stroke="#2a2020" stroke-width="0.36"/>
<rect x="708.01" y="260.0" width="0.7" height="17.3" fill="#3a3a3a"/>
<rect x="707.48" y="260.9" width="1.76" height="15.5" fill="#3d733d" stroke="#2a2020" stroke-width="0.36"/>
<rect x="710.56" y="252.7" width="0.7" height="15.5" fill="#3a3a3a"/>
<rect x="710.03" y="261.8" width="1.76" height="1.8" fill="#7b4545" stroke="#2a2020" stroke-width="0.36"/>
<rect x="713.38" y="246.4" width="0.7" height="13.6" fill="#3a3a3a"/>
<rect x="712.85" y="247.7" width="1.76" height="8.2" fill="#7b4545" stroke="#2a2020" stroke-width="0.36"/>
<rect x="716.01" y="247.3" width="0.7" height="15.5" fill="#3a3a3a"/>
<rect x="715.48" y="251.4" width="1.76" height="2.3" fill="#7b4545" stroke="#2a2020" stroke-width="0.36"/>
<rect x="718.65" y="252.7" width="0.7" height="10.0" fill="#3a3a3a"/>
<rect x="718.12" y="253.2" width="1.76" height="9.1" fill="#7b4545" stroke="#2a2020" stroke-width="0.36"/>
<rect x="721.47" y="239.1" width="0.7" height="22.7" fill="#3a3a3a"/>
<rect x="720.94" y="253.6" width="1.76" height="7.3" fill="#7b4545" stroke="#2a2020" stroke-width="0.36"/>
<rect x="724.56" y="260.0" width="0.7" height="8.2" fill="#3a3a3a"/>
<rect x="724.03" y="260.9" width="1.76" height="6.4" fill="#7b4545" stroke="#2a2020" stroke-width="0.36"/>
<rect x="727.10" y="258.2" width="0.7" height="13.6" fill="#3a3a3a"/>
<rect x="726.57" y="265.5" width="1.76" height="1.8" fill="#7b4545" stroke="#2a2020" stroke-width="0.36"/>
<rect x="730.01" y="255.5" width="0.7" height="9.1" fill="#3a3a3a"/>
<rect x="729.48" y="258.2" width="1.76" height="1.8" fill="#3d733d" stroke="#2a2020" stroke-width="0.36"/>
<rect x="732.51" y="292.7" width="0.7" height="53.6" fill="#3a3a3a"/>
<rect x="731.98" y="292.7" width="1.76" height="35.5" fill="#7b4545" stroke="#2a2020" stroke-width="0.36"/>
<rect x="734.88" y="310.0" width="0.7" height="38.2" fill="#3a3a3a"/>
<rect x="734.35" y="325.5" width="1.76" height="22.7" fill="#7b4545" stroke="#2a2020" stroke-width="0.36"/>
<rect x="737.38" y="343.6" width="0.7" height="24.5" fill="#3a3a3a"/>
<rect x="736.85" y="346.4" width="1.76" height="20.0" fill="#7b4545" stroke="#2a2020" stroke-width="0.36"/>
<rect x="740.10" y="360.0" width="0.7" height="28.2" fill="#3a3a3a"/>
<rect x="739.57" y="360.0" width="1.76" height="27.3" fill="#7b4545" stroke="#2a2020" stroke-width="0.36"/>
<rect x="742.83" y="370.9" width="0.7" height="13.6" fill="#3a3a3a"/>
<rect x="742.30" y="374.5" width="1.76" height="7.3" fill="#7b4545" stroke="#2a2020" stroke-width="0.36"/>
<rect x="745.38" y="370.9" width="0.7" height="14.5" fill="#3a3a3a"/>
<rect x="744.85" y="371.8" width="1.76" height="7.3" fill="#3d733d" stroke="#2a2020" stroke-width="0.36"/>
<rect x="748.10" y="368.2" width="0.7" height="12.7" fill="#3a3a3a"/>
<rect x="747.57" y="378.2" width="1.76" height="1.8" fill="#7b4545" stroke="#2a2020" stroke-width="0.36"/>
<rect x="750.83" y="362.7" width="0.7" height="21.8" fill="#3a3a3a"/>
<rect x="750.30" y="375.5" width="1.76" height="1.8" fill="#7b4545" stroke="#2a2020" stroke-width="0.36"/>
<rect x="753.74" y="375.5" width="0.7" height="12.7" fill="#3a3a3a"/>
<rect x="753.21" y="376.4" width="1.76" height="6.4" fill="#7b4545" stroke="#2a2020" stroke-width="0.36"/>
<rect x="756.29" y="379.1" width="0.7" height="27.3" fill="#3a3a3a"/>
<rect x="755.76" y="388.2" width="1.76" height="15.5" fill="#7b4545" stroke="#2a2020" stroke-width="0.36"/>
<rect x="759.20" y="391.8" width="0.7" height="18.2" fill="#3a3a3a"/>
<rect x="758.67" y="398.2" width="1.76" height="2.7" fill="#3d733d" stroke="#2a2020" stroke-width="0.36"/>
<rect x="761.74" y="382.7" width="0.7" height="16.4" fill="#3a3a3a"/>
<rect x="761.21" y="388.2" width="1.76" height="10.0" fill="#3d733d" stroke="#2a2020" stroke-width="0.36"/>
<rect x="764.47" y="383.6" width="0.7" height="9.1" fill="#3a3a3a"/>
<rect x="763.94" y="384.5" width="1.76" height="3.6" fill="#7b4545" stroke="#2a2020" stroke-width="0.36"/>
<rect x="766.83" y="363.6" width="0.7" height="29.1" fill="#3a3a3a"/>
<rect x="766.30" y="363.6" width="1.76" height="20.0" fill="#3d733d" stroke="#2a2020" stroke-width="0.36"/>
<rect x="769.79" y="363.6" width="0.7" height="20.0" fill="#3a3a3a"/>
<rect x="769.26" y="363.6" width="1.76" height="17.7" fill="#7b4545" stroke="#2a2020" stroke-width="0.36"/>
<rect x="772.79" y="370.0" width="0.7" height="14.5" fill="#3a3a3a"/>
<rect x="772.26" y="370.9" width="1.76" height="1.8" fill="#3d733d" stroke="#2a2020" stroke-width="0.36"/>
<rect x="775.24" y="350.0" width="0.7" height="20.9" fill="#3a3a3a"/>
<rect x="774.71" y="350.0" width="1.76" height="15.9" fill="#3d733d" stroke="#2a2020" stroke-width="0.36"/>
<rect x="777.97" y="349.1" width="0.7" height="11.8" fill="#3a3a3a"/>
<rect x="777.44" y="350.9" width="1.76" height="1.8" fill="#7b4545" stroke="#2a2020" stroke-width="0.36"/>
<rect x="780.51" y="350.0" width="0.7" height="13.6" fill="#3a3a3a"/>
<rect x="779.98" y="350.9" width="1.76" height="3.2" fill="#7b4545" stroke="#2a2020" stroke-width="0.36"/>
<rect x="783.42" y="355.5" width="0.7" height="27.3" fill="#3a3a3a"/>
<rect x="782.89" y="355.5" width="1.76" height="15.5" fill="#7b4545" stroke="#2a2020" stroke-width="0.36"/>
<rect x="785.97" y="368.2" width="0.7" height="14.5" fill="#3a3a3a"/>
<rect x="785.44" y="370.9" width="1.76" height="10.9" fill="#7b4545" stroke="#2a2020" stroke-width="0.36"/>
<rect x="788.70" y="371.8" width="0.7" height="11.8" fill="#3a3a3a"/>
<rect x="788.17" y="380.0" width="1.76" height="1.8" fill="#3d733d" stroke="#2a2020" stroke-width="0.36"/>
<rect x="791.33" y="375.5" width="0.7" height="9.1" fill="#3a3a3a"/>
<rect x="790.80" y="379.1" width="1.76" height="1.8" fill="#3d733d" stroke="#2a2020" stroke-width="0.36"/>
<rect x="793.97" y="374.5" width="0.7" height="10.9" fill="#3a3a3a"/>
<rect x="793.44" y="375.5" width="1.76" height="6.4" fill="#3d733d" stroke="#2a2020" stroke-width="0.36"/>
<rect x="796.74" y="374.5" width="0.7" height="25.5" fill="#3a3a3a"/>
<rect x="796.21" y="375.5" width="1.76" height="23.6" fill="#7b4545" stroke="#2a2020" stroke-width="0.36"/>
<rect x="799.29" y="392.7" width="0.7" height="17.3" fill="#3a3a3a"/>
<rect x="798.76" y="398.2" width="1.76" height="3.6" fill="#7b4545" stroke="#2a2020" stroke-width="0.36"/>
<rect x="802.01" y="399.1" width="0.7" height="14.5" fill="#3a3a3a"/>
<rect x="801.48" y="400.0" width="1.76" height="6.4" fill="#7b4545" stroke="#2a2020" stroke-width="0.36"/>
<rect x="804.56" y="394.5" width="0.7" height="11.8" fill="#3a3a3a"/>
<rect x="804.03" y="394.5" width="1.76" height="3.6" fill="#3d733d" stroke="#2a2020" stroke-width="0.36"/>
<rect x="807.47" y="369.1" width="0.7" height="34.5" fill="#3a3a3a"/>
<rect x="806.94" y="372.7" width="1.76" height="30.9" fill="#3d733d" stroke="#2a2020" stroke-width="0.36"/>
<rect x="810.01" y="368.2" width="0.7" height="20.9" fill="#3a3a3a"/>
<rect x="809.48" y="368.2" width="1.76" height="15.5" fill="#7b4545" stroke="#2a2020" stroke-width="0.36"/>
<rect x="812.74" y="370.9" width="0.7" height="17.3" fill="#3a3a3a"/>
<rect x="812.21" y="382.7" width="1.76" height="4.5" fill="#3d733d" stroke="#2a2020" stroke-width="0.36"/>
<rect x="815.10" y="381.8" width="0.7" height="9.1" fill="#3a3a3a"/>
<rect x="814.57" y="382.7" width="1.76" height="4.5" fill="#7b4545" stroke="#2a2020" stroke-width="0.36"/>
<rect x="818.01" y="377.3" width="0.7" height="12.7" fill="#3a3a3a"/>
<rect x="817.48" y="380.9" width="1.76" height="1.8" fill="#3d733d" stroke="#2a2020" stroke-width="0.36"/>
<rect x="820.74" y="378.2" width="0.7" height="10.0" fill="#3a3a3a"/>
<rect x="820.21" y="379.1" width="1.76" height="3.6" fill="#3d733d" stroke="#2a2020" stroke-width="0.36"/>
<rect x="823.65" y="368.2" width="0.7" height="20.9" fill="#3a3a3a"/>
<rect x="823.12" y="372.7" width="1.76" height="10.0" fill="#3d733d" stroke="#2a2020" stroke-width="0.36"/>
<rect x="19.5" y="150.95" width="831" height="0.6" fill="#e87070" opacity="0.8"/>
<rect x="158.25" y="49" width="0.6" height="381" fill="#e87070" opacity="0.8"/>
<rect x="133.9" y="431" width="0.7" height="45" fill="#e87878" opacity="0.75"/>
<rect x="158.25" y="477" width="0.7" height="19" fill="#e87878" opacity="0.75"/>
<polyline points="45.5,48.9 61.4,54.3 77.3,62.9 93.2,69.3 109.1,74.4 125.0,79.8 140.9,86.1 156.8,92.5 172.7,98.9 188.6,104.3 204.5,107.5 220.5,108.7 236.4,110.0 252.3,112.5 268.2,115.7 284.1,118.6 300.0,122.1 302.7,122.5 315.5,125.6 328.2,129.8 337.7,134.5 347.3,140.3 356.8,146.6 366.4,152.0 375.9,156.2 385.5,159.4 395.0,161.0 404.5,161.0 417.3,160.6 430.0,162.2 442.7,163.5 455.5,163.8 468.2,164.1 480.9,164.1 493.6,163.8 506.4,163.2 519.1,163.2 531.8,164.5 544.5,165.7 557.3,167.3 560.0,168.2 572.7,169.8 585.5,171.4 598.2,173.0 610.9,174.5 623.6,177.1 636.4,179.3 649.1,182.5 661.8,186.6 674.5,191.1 687.3,195.2 700.0,199.4 712.7,202.5 725.5,205.4 735.0,208.6 744.5,214.3 754.1,220.0 763.6,226.4 773.2,231.8 782.7,237.2 792.3,243.0 801.8,248.4 811.4,253.1 822.5,257.3" fill="none" stroke="#ea525c" stroke-width="0.8" stroke-dasharray="2.3 2.6"/>
<polyline points="20.0,78.2 29.5,80.7 39.1,86.1 51.8,92.5 61.4,100.5 70.9,110.0 80.5,118.6 90.0,125.3 99.5,130.7 109.1,135.5 118.6,141.8 128.2,149.8 137.7,157.7 147.3,165.7 156.8,172.0 166.4,177.5 175.9,181.0 185.5,182.2 195.0,181.0 204.5,178.4 214.1,175.9 223.6,174.3 233.2,173.0 242.7,171.4 252.3,170.5 261.8,168.9 271.4,166.6 280.9,164.1 290.5,162.2 290.0,163.2 299.5,161.6 309.1,161.0 318.6,161.6 328.2,163.2 334.5,168.0 340.9,175.9 350.5,188.6 360.0,201.4 369.5,212.5 379.1,220.5 385.5,225.2 391.8,229.0 401.4,229.0 410.9,227.8 420.5,226.8 430.0,227.5 439.5,227.8 449.1,226.2 458.6,223.6 468.2,217.3 477.7,207.7 487.3,196.6 496.8,185.5 506.4,175.9 515.9,169.5 522.3,167.0 531.8,168.0 541.4,172.7 547.7,175.9 560.5,177.5 560.0,177.7 569.5,178.4 579.1,180.9 588.6,183.5 598.2,184.7 607.7,186.6 617.3,192.0 626.8,197.5 636.4,202.5 645.9,208.9 655.5,215.9 665.0,220.7 674.5,225.5 684.1,231.8 693.6,238.2 700.0,243.6 718.0,251.0 736.4,263.6 754.5,284.5 769.0,301.8 780.0,311.0 802.7,330.0 822.7,344.5" fill="none" stroke="#506ee6" stroke-width="0.8" stroke-dasharray="2.3 2.6"/>
<rect x="40.5" y="296" width="9.6" height="13.2" rx="1.2" fill="#fff" stroke="#9dbaf0" stroke-width="0.7"/><text x="43.4" y="304.9" font-size="6.8" fill="#111">2</text>
<text x="20.6" y="428.6" font-size="6.6" fill="#111" textLength="90.5" lengthAdjust="spacingAndGlyphs" stroke="#111" stroke-width="0.15">ProRealTime.com - End of Day</text>
<rect x="125.4" y="421.3" width="7.6" height="6.4" fill="#f4f6fa"/><rect x="125.4" y="421.3" width="7.6" height="2" fill="#3a86bc"/><rect x="126.2" y="423.9" width="1.6" height="1.3" fill="#e05050"/><rect x="128.4" y="423.9" width="1.4" height="1.3" fill="#5a8ae0"/><rect x="127.2" y="426.4" width="1.4" height="1.9" fill="#c8b428"/><rect x="129.20000000000002" y="425.8" width="1.5" height="2.5" fill="#c8b428"/><rect x="131.3" y="425" width="1.6" height="3.3" fill="#c8b428"/>
<rect x="417.8" y="421.3" width="7.6" height="6.4" fill="#f4f6fa"/><rect x="417.8" y="421.3" width="7.6" height="2" fill="#3a86bc"/><rect x="418.6" y="423.9" width="1.6" height="1.3" fill="#e05050"/><rect x="420.8" y="423.9" width="1.4" height="1.3" fill="#5a8ae0"/><rect x="419.6" y="426.4" width="1.4" height="1.9" fill="#c8b428"/><rect x="421.6" y="425.8" width="1.5" height="2.5" fill="#c8b428"/><rect x="423.7" y="425" width="1.6" height="3.3" fill="#c8b428"/>
<rect x="820.4" y="421.8" width="6.6" height="5.6" fill="#f4f4f4" stroke="#b0b0b0" stroke-width="0.5"/><text x="822.9" y="426.6" font-size="4.6" fill="#999">i</text>
<rect x="19.4" y="430.1" width="860" height="0.9" fill="#5a80cc"/>
<rect x="19.4" y="476" width="860" height="0.9" fill="#5a80cc"/>
<rect x="19.4" y="495.2" width="831" height="0.8" fill="#5a80cc"/>
<rect x="850.1" y="38.5" width="1" height="457.5" fill="#5a80cc"/>
<rect x="878.8" y="38.5" width="1.2" height="467" fill="#b9cdf4"/>
<rect x="18.8" y="38.5" width="0.8" height="467" fill="#5078d0"/>
<rect x="850.6" y="53.3" width="2" height="0.6" fill="#5a80cc"/>
<text x="854.6" y="55.3" font-size="6.2" fill="#111">8.6</text>
<rect x="850.6" y="85.4" width="2" height="0.6" fill="#5a80cc"/>
<text x="854.6" y="87.4" font-size="6.2" fill="#111">8.4</text>
<rect x="850.6" y="117.5" width="2" height="0.6" fill="#5a80cc"/>
<text x="854.6" y="119.5" font-size="6.2" fill="#111">8.2</text>
<rect x="850.6" y="181.7" width="2" height="0.6" fill="#5a80cc"/>
<text x="854.6" y="183.7" font-size="6.2" fill="#111">7.8</text>
<rect x="850.6" y="213.8" width="2" height="0.6" fill="#5a80cc"/>
<text x="854.6" y="215.8" font-size="6.2" fill="#111">7.6</text>
<rect x="850.6" y="245.9" width="2" height="0.6" fill="#5a80cc"/>
<text x="854.6" y="247.9" font-size="6.2" fill="#111">7.4</text>
<rect x="850.6" y="278.0" width="2" height="0.6" fill="#5a80cc"/>
<text x="854.6" y="280.0" font-size="6.2" fill="#111">7.2</text>
<rect x="850.6" y="310.1" width="2" height="0.6" fill="#5a80cc"/>
<text x="854.6" y="312.1" font-size="6.2" fill="#111">7</text>
<rect x="850.6" y="342.2" width="2" height="0.6" fill="#5a80cc"/>
<text x="854.6" y="344.2" font-size="6.2" fill="#111">6.8</text>
<rect x="850.6" y="406.4" width="2" height="0.6" fill="#5a80cc"/>
<text x="854.6" y="408.4" font-size="6.2" fill="#111">6.4</text>
<rect x="850.6" y="69.3" width="1.2" height="0.6" fill="#7a98d8"/>
<rect x="850.6" y="101.4" width="1.2" height="0.6" fill="#7a98d8"/>
<rect x="850.6" y="133.5" width="1.2" height="0.6" fill="#7a98d8"/>
<rect x="850.6" y="165.6" width="1.2" height="0.6" fill="#7a98d8"/>
<rect x="850.6" y="197.7" width="1.2" height="0.6" fill="#7a98d8"/>
<rect x="850.6" y="229.8" width="1.2" height="0.6" fill="#7a98d8"/>
<rect x="850.6" y="261.9" width="1.2" height="0.6" fill="#7a98d8"/>
<rect x="850.6" y="294.0" width="1.2" height="0.6" fill="#7a98d8"/>
<rect x="850.6" y="326.1" width="1.2" height="0.6" fill="#7a98d8"/>
<rect x="850.6" y="358.2" width="1.2" height="0.6" fill="#7a98d8"/>
<rect x="850.6" y="390.3" width="1.2" height="0.6" fill="#7a98d8"/>
<rect x="853.2" y="147.4" width="14.6" height="8.2" fill="#f4f000" stroke="#555" stroke-width="0.5"/><text x="854.6" y="154" font-size="6.2" class="b" fill="#111">7.99</text>
<rect x="850.6" y="151" width="2.6" height="0.7" fill="#111"/>
<rect x="853.4" y="369" width="14.6" height="8.4" fill="#fcc400" stroke="#7a8ad0" stroke-width="0.5"/><text x="854.8" y="375.6" font-size="6.2" class="b" fill="#111">6.61</text>
<rect x="850.6" y="373" width="2.8" height="0.7" fill="#111"/>
<polyline points="20.0,442.5 23.0,444.2 25.5,449.2 28.5,456.0 31.8,454.2 34.2,452.5 36.8,453.0 38.0,451.0 39.2,455.0 43.0,451.8 48.0,448.5 50.5,453.0 53.0,456.0 58.0,455.0 61.8,453.0 66.8,452.0 71.8,453.5 76.8,455.5 80.5,451.8 83.5,445.5 86.0,440.5 90.5,438.5 95.5,440.5 98.0,442.5 103.0,445.0 105.5,444.2 109.2,441.0 113.0,442.5 116.8,445.0 120.5,445.5 124.2,445.0 128.0,445.5 131.8,446.8 136.8,449.2 140.5,448.0 143.0,446.8 144.2,449.2 148.0,446.0 150.5,446.8 154.2,444.2 158.0,445.0 161.8,442.5 164.2,444.2 168.0,443.0 171.8,446.0 175.5,447.5 179.2,443.0 183.0,441.8 186.8,442.5 190.5,443.5 193.0,439.2 196.8,440.0 200.5,436.8 204.2,436.0 210.5,437.5 218.0,438.0 224.2,439.8 230.5,438.5 238.0,438.5 243.0,438.0 246.8,436.0 249.2,438.0 252.5,448.0 255.0,443.0 259.2,442.5 263.0,445.0 265.5,445.5 268.5,441.8 271.0,444.2 274.2,443.5 278.0,443.0 283.0,445.5 286.8,445.0 290.5,448.5 294.2,447.5 298.0,445.0 301.8,446.8 308.0,449.2 315.5,449.2 323.0,450.0 328.0,451.8 330.5,456.8 333.0,465.5 335.5,474.2 338.0,463.0 340.5,465.5 343.0,456.8 346.8,451.8 349.2,450.5 354.2,452.5 359.2,451.8 363.0,449.2 365.5,450.0 368.0,445.0 370.0,448.0 374.2,445.5 378.0,441.8 383.0,441.0 384.2,440.0 386.8,442.5 390.5,439.2 398.0,434.2 403.0,435.0 408.0,434.8 413.0,434.2 418.0,437.5 423.0,440.5 426.8,442.5 429.2,441.0 433.0,442.5 438.0,442.2 441.8,440.5 445.5,438.0 448.5,439.2 450.5,438.5 454.2,439.8 458.0,441.0 463.0,442.2 469.2,442.5 472.5,441.8 475.5,442.5 480.5,440.0 485.5,436.0 488.5,440.0 493.0,438.0 496.8,436.0 500.5,438.0 505.5,441.2 509.2,440.0 514.2,440.0 518.0,443.5 521.8,446.0 526.8,451.2 530.5,450.5 534.2,446.0 537.5,446.8 541.8,448.5 547.5,441.8 554.2,442.2 559.2,443.5 563.0,445.0 566.8,444.8 569.2,446.8 574.2,447.2 579.2,449.2 582.2,450.0 585.5,446.8 588.0,443.0 590.5,436.0 593.0,439.2 595.5,439.8 599.2,443.5 603.0,445.5 610.5,446.0 614.2,448.0 616.8,445.5 620.0,448.0 622.5,444.8 625.5,444.2 628.0,445.5 631.8,443.0 636.8,444.2 641.8,445.5 645.5,449.2 648.5,451.8 651.8,452.2 655.5,450.0 660.0,451.0 663.8,450.0 667.5,450.0 672.5,446.8 676.2,449.2 681.2,448.5 686.2,449.2 690.0,451.0 693.8,453.8 697.5,450.0 699.5,450.5 703.8,444.2 708.8,440.0 713.8,439.2 720.0,439.2 725.0,441.8 730.0,440.5 733.0,454.2 736.2,459.2 740.5,463.5 746.2,456.2 751.2,456.8 754.5,458.0 757.0,460.5 759.5,458.5 762.5,453.8 765.0,453.5 767.5,446.8 771.2,447.5 775.5,443.0 780.0,443.5 786.2,448.0 790.0,447.2 795.0,446.8 798.8,450.5 802.5,451.8 807.5,443.5 811.2,445.0 815.0,444.2 818.8,444.8 822.0,443.5 823.8,442.5" fill="none" stroke="#222" stroke-width="0.8"/>
<rect x="19.4" y="431" width="115.4" height="9.6" fill="#b3c9f6" stroke="#7c9ce4" stroke-width="0.6"/>
<rect x="21.6" y="432.8" width="5.6" height="5.8" fill="#000"/>
<text x="29" y="438.6" font-size="6.6" fill="#0a1430" textLength="79.7" lengthAdjust="spacingAndGlyphs" stroke="#0a1430" stroke-width="0.2">Relative Strength Index (14)</text><text x="113" y="438.6" font-size="6.6" fill="#0a1430" textLength="19.5" lengthAdjust="spacingAndGlyphs" stroke="#0a1430" stroke-width="0.2">39.812</text>
<rect x="853.4" y="438.8" width="21.6" height="7.6" fill="#fff" stroke="#5a80cc" stroke-width="0.6"/><text x="854.6" y="445" font-size="6.2" fill="#111">49.743</text>
<rect x="850.6" y="442.3" width="2.8" height="0.7" fill="#111"/>
<rect x="19.90" y="494.8" width="1.7" height="0.6" fill="#e05a5a"/>
<rect x="22.59" y="494.6" width="1.7" height="0.8" fill="#e05a5a"/>
<rect x="25.27" y="495.4" width="1.7" height="0.0" fill="#e05a5a"/>
<rect x="27.96" y="495.4" width="1.7" height="0.0" fill="#3cb44a"/>
<rect x="30.65" y="495.4" width="1.7" height="0.0" fill="#e05a5a"/>
<rect x="33.33" y="495.0" width="1.7" height="0.4" fill="#3cb44a"/>
<rect x="36.02" y="494.6" width="1.7" height="0.8" fill="#3cb44a"/>
<rect x="38.71" y="491.4" width="1.7" height="4.0" fill="#e05a5a"/>
<rect x="41.39" y="494.6" width="1.7" height="0.8" fill="#3cb44a"/>
<rect x="44.08" y="495.4" width="1.7" height="0.0" fill="#e05a5a"/>
<rect x="46.77" y="495.4" width="1.7" height="0.0" fill="#e05a5a"/>
<rect x="49.45" y="491.4" width="1.7" height="4.0" fill="#e05a5a"/>
<rect x="52.14" y="492.9" width="1.7" height="2.5" fill="#e05a5a"/>
<rect x="54.83" y="492.9" width="1.7" height="2.5" fill="#e05a5a"/>
<rect x="57.51" y="490.9" width="1.7" height="4.5" fill="#e05a5a"/>
<rect x="60.20" y="494.9" width="1.7" height="0.5" fill="#e05a5a"/>
<rect x="62.89" y="495.1" width="1.7" height="0.3" fill="#3cb44a"/>
<rect x="65.57" y="495.0" width="1.7" height="0.4" fill="#3cb44a"/>
<rect x="68.26" y="494.2" width="1.7" height="1.2" fill="#e05a5a"/>
<rect x="70.95" y="495.4" width="1.7" height="0.0" fill="#e05a5a"/>
<rect x="73.63" y="494.4" width="1.7" height="1.0" fill="#e05a5a"/>
<rect x="76.32" y="494.6" width="1.7" height="0.8" fill="#e05a5a"/>
<rect x="79.01" y="494.4" width="1.7" height="1.0" fill="#e05a5a"/>
<rect x="81.69" y="494.4" width="1.7" height="1.0" fill="#3cb44a"/>
<rect x="84.38" y="495.0" width="1.7" height="0.4" fill="#e05a5a"/>
<rect x="87.07" y="492.4" width="1.7" height="3.0" fill="#3cb44a"/>
<rect x="89.75" y="494.9" width="1.7" height="0.5" fill="#e05a5a"/>
<rect x="92.44" y="494.8" width="1.7" height="0.6" fill="#e05a5a"/>
<rect x="95.13" y="494.9" width="1.7" height="0.5" fill="#e05a5a"/>
<rect x="97.81" y="495.4" width="1.7" height="0.0" fill="#3cb44a"/>
<rect x="100.50" y="494.6" width="1.7" height="0.8" fill="#3cb44a"/>
<rect x="103.19" y="494.8" width="1.7" height="0.6" fill="#3cb44a"/>
<rect x="105.87" y="494.4" width="1.7" height="1.0" fill="#3cb44a"/>
<rect x="108.56" y="495.4" width="1.7" height="0.0" fill="#e05a5a"/>
<rect x="111.25" y="490.9" width="1.7" height="4.5" fill="#e05a5a"/>
<rect x="113.93" y="494.8" width="1.7" height="0.6" fill="#e05a5a"/>
<rect x="116.62" y="494.4" width="1.7" height="1.0" fill="#3cb44a"/>
<rect x="119.31" y="495.4" width="1.7" height="0.0" fill="#e05a5a"/>
<rect x="121.99" y="494.4" width="1.7" height="1.0" fill="#e05a5a"/>
<rect x="124.68" y="495.4" width="1.7" height="0.0" fill="#3cb44a"/>
<rect x="127.36" y="494.9" width="1.7" height="0.5" fill="#e05a5a"/>
<rect x="130.05" y="494.4" width="1.7" height="1.0" fill="#3cb44a"/>
<rect x="132.74" y="494.6" width="1.7" height="0.8" fill="#e05a5a"/>
<rect x="135.42" y="494.8" width="1.7" height="0.6" fill="#3cb44a"/>
<rect x="138.11" y="487.4" width="1.7" height="8.0" fill="#3cb44a"/>
<rect x="140.80" y="495.4" width="1.7" height="0.0" fill="#3cb44a"/>
<rect x="143.48" y="495.0" width="1.7" height="0.4" fill="#e05a5a"/>
<rect x="146.17" y="495.1" width="1.7" height="0.3" fill="#e05a5a"/>
<rect x="148.86" y="494.6" width="1.7" height="0.8" fill="#3cb44a"/>
<rect x="151.54" y="494.4" width="1.7" height="1.0" fill="#3cb44a"/>
<rect x="154.23" y="494.4" width="1.7" height="1.0" fill="#3cb44a"/>
<rect x="156.92" y="494.9" width="1.7" height="0.5" fill="#e05a5a"/>
<rect x="159.60" y="494.6" width="1.7" height="0.8" fill="#e05a5a"/>
<rect x="162.29" y="494.9" width="1.7" height="0.5" fill="#e05a5a"/>
<rect x="164.98" y="494.8" width="1.7" height="0.6" fill="#e05a5a"/>
<rect x="167.66" y="494.6" width="1.7" height="0.8" fill="#e05a5a"/>
<rect x="170.35" y="495.1" width="1.7" height="0.3" fill="#3cb44a"/>
<rect x="173.04" y="495.1" width="1.7" height="0.3" fill="#3cb44a"/>
<rect x="175.72" y="495.0" width="1.7" height="0.4" fill="#3cb44a"/>
<rect x="178.41" y="495.1" width="1.7" height="0.3" fill="#3cb44a"/>
<rect x="181.10" y="495.4" width="1.7" height="0.0" fill="#3cb44a"/>
<rect x="183.78" y="494.2" width="1.7" height="1.2" fill="#3cb44a"/>
<rect x="186.47" y="494.8" width="1.7" height="0.6" fill="#e05a5a"/>
<rect x="189.16" y="494.2" width="1.7" height="1.2" fill="#e05a5a"/>
<rect x="191.84" y="495.4" width="1.7" height="0.0" fill="#3cb44a"/>
<rect x="194.53" y="494.2" width="1.7" height="1.2" fill="#3cb44a"/>
<rect x="197.22" y="494.6" width="1.7" height="0.8" fill="#3cb44a"/>
<rect x="199.90" y="494.4" width="1.7" height="1.0" fill="#e05a5a"/>
<rect x="202.59" y="495.4" width="1.7" height="0.0" fill="#3cb44a"/>
<rect x="205.28" y="495.0" width="1.7" height="0.4" fill="#3cb44a"/>
<rect x="207.96" y="495.4" width="1.7" height="0.0" fill="#3cb44a"/>
<rect x="210.65" y="495.4" width="1.7" height="0.0" fill="#3cb44a"/>
<rect x="213.34" y="495.1" width="1.7" height="0.3" fill="#e05a5a"/>
<rect x="216.02" y="492.4" width="1.7" height="3.0" fill="#e05a5a"/>
<rect x="218.71" y="495.4" width="1.7" height="0.0" fill="#e05a5a"/>
<rect x="221.40" y="494.6" width="1.7" height="0.8" fill="#3cb44a"/>
<rect x="224.08" y="491.4" width="1.7" height="4.0" fill="#e05a5a"/>
<rect x="226.77" y="494.8" width="1.7" height="0.6" fill="#3cb44a"/>
<rect x="229.46" y="495.4" width="1.7" height="0.0" fill="#e05a5a"/>
<rect x="232.14" y="494.4" width="1.7" height="1.0" fill="#3cb44a"/>
<rect x="234.83" y="494.9" width="1.7" height="0.5" fill="#3cb44a"/>
<rect x="237.52" y="495.4" width="1.7" height="0.0" fill="#e05a5a"/>
<rect x="240.20" y="494.9" width="1.7" height="0.5" fill="#3cb44a"/>
<rect x="242.89" y="495.1" width="1.7" height="0.3" fill="#e05a5a"/>
<rect x="245.58" y="495.0" width="1.7" height="0.4" fill="#e05a5a"/>
<rect x="248.26" y="494.2" width="1.7" height="1.2" fill="#3cb44a"/>
<rect x="250.95" y="492.9" width="1.7" height="2.5" fill="#e05a5a"/>
<rect x="253.64" y="494.2" width="1.7" height="1.2" fill="#3cb44a"/>
<rect x="256.32" y="495.4" width="1.7" height="0.0" fill="#e05a5a"/>
<rect x="259.01" y="494.9" width="1.7" height="0.5" fill="#e05a5a"/>
<rect x="261.70" y="495.1" width="1.7" height="0.3" fill="#3cb44a"/>
<rect x="264.38" y="495.0" width="1.7" height="0.4" fill="#e05a5a"/>
<rect x="267.07" y="494.2" width="1.7" height="1.2" fill="#3cb44a"/>
<rect x="269.76" y="495.0" width="1.7" height="0.4" fill="#e05a5a"/>
<rect x="272.44" y="495.0" width="1.7" height="0.4" fill="#e05a5a"/>
<rect x="275.13" y="494.6" width="1.7" height="0.8" fill="#e05a5a"/>
<rect x="277.82" y="495.0" width="1.7" height="0.4" fill="#3cb44a"/>
<rect x="280.50" y="494.4" width="1.7" height="1.0" fill="#3cb44a"/>
<rect x="283.19" y="495.4" width="1.7" height="0.0" fill="#e05a5a"/>
<rect x="285.88" y="494.9" width="1.7" height="0.5" fill="#3cb44a"/>
<rect x="288.56" y="495.0" width="1.7" height="0.4" fill="#e05a5a"/>
<rect x="291.25" y="494.8" width="1.7" height="0.6" fill="#3cb44a"/>
<rect x="293.94" y="494.8" width="1.7" height="0.6" fill="#e05a5a"/>
<rect x="296.62" y="494.8" width="1.7" height="0.6" fill="#3cb44a"/>
<rect x="299.31" y="495.4" width="1.7" height="0.0" fill="#3cb44a"/>
<rect x="302.00" y="495.0" width="1.7" height="0.4" fill="#3cb44a"/>
<rect x="304.68" y="494.4" width="1.7" height="1.0" fill="#e05a5a"/>
<rect x="307.37" y="495.4" width="1.7" height="0.0" fill="#3cb44a"/>
<rect x="310.06" y="494.8" width="1.7" height="0.6" fill="#e05a5a"/>
<rect x="312.74" y="495.4" width="1.7" height="0.0" fill="#e05a5a"/>
<rect x="315.43" y="495.4" width="1.7" height="0.0" fill="#e05a5a"/>
<rect x="318.12" y="495.0" width="1.7" height="0.4" fill="#3cb44a"/>
<rect x="320.80" y="495.1" width="1.7" height="0.3" fill="#3cb44a"/>
<rect x="323.49" y="494.8" width="1.7" height="0.6" fill="#3cb44a"/>
<rect x="326.17" y="494.6" width="1.7" height="0.8" fill="#3cb44a"/>
<rect x="328.86" y="495.4" width="1.7" height="0.0" fill="#e05a5a"/>
<rect x="331.55" y="494.2" width="1.7" height="1.2" fill="#e05a5a"/>
<rect x="334.23" y="494.5" width="1.7" height="0.9" fill="#3cb44a"/>
<rect x="336.92" y="493.5" width="1.7" height="1.9" fill="#e05a5a"/>
<rect x="339.61" y="494.2" width="1.7" height="1.2" fill="#e05a5a"/>
<rect x="342.29" y="493.5" width="1.7" height="1.9" fill="#e05a5a"/>
<rect x="344.98" y="494.8" width="1.7" height="0.6" fill="#3cb44a"/>
<rect x="347.67" y="494.2" width="1.7" height="1.2" fill="#3cb44a"/>
<rect x="350.35" y="495.4" width="1.7" height="0.0" fill="#e05a5a"/>
<rect x="353.04" y="495.4" width="1.7" height="0.0" fill="#e05a5a"/>
<rect x="355.73" y="495.1" width="1.7" height="0.3" fill="#3cb44a"/>
<rect x="358.41" y="495.0" width="1.7" height="0.4" fill="#e05a5a"/>
<rect x="361.10" y="495.0" width="1.7" height="0.4" fill="#3cb44a"/>
<rect x="363.79" y="495.0" width="1.7" height="0.4" fill="#3cb44a"/>
<rect x="366.47" y="495.0" width="1.7" height="0.4" fill="#e05a5a"/>
<rect x="369.16" y="494.8" width="1.7" height="0.6" fill="#3cb44a"/>
<rect x="371.85" y="494.6" width="1.7" height="0.8" fill="#e05a5a"/>
<rect x="374.53" y="495.4" width="1.7" height="0.0" fill="#e05a5a"/>
<rect x="377.22" y="494.8" width="1.7" height="0.6" fill="#e05a5a"/>
<rect x="379.91" y="494.2" width="1.7" height="1.2" fill="#3cb44a"/>
<rect x="382.59" y="494.2" width="1.7" height="1.2" fill="#3cb44a"/>
<rect x="385.28" y="494.2" width="1.7" height="1.2" fill="#e05a5a"/>
<rect x="387.97" y="494.5" width="1.7" height="0.9" fill="#e05a5a"/>
<rect x="390.65" y="494.2" width="1.7" height="1.2" fill="#e05a5a"/>
<rect x="393.34" y="494.2" width="1.7" height="1.2" fill="#3cb44a"/>
<rect x="396.03" y="493.5" width="1.7" height="1.9" fill="#e05a5a"/>
<rect x="398.71" y="494.5" width="1.7" height="0.9" fill="#e05a5a"/>
<rect x="401.40" y="493.9" width="1.7" height="1.5" fill="#e05a5a"/>
<rect x="404.09" y="493.3" width="1.7" height="2.1" fill="#e05a5a"/>
<rect x="406.77" y="494.5" width="1.7" height="0.9" fill="#e05a5a"/>
<rect x="409.46" y="494.5" width="1.7" height="0.9" fill="#3cb44a"/>
<rect x="412.15" y="494.0" width="1.7" height="1.4" fill="#3cb44a"/>
<rect x="414.83" y="494.5" width="1.7" height="0.9" fill="#e05a5a"/>
<rect x="417.52" y="493.3" width="1.7" height="2.1" fill="#3cb44a"/>
<rect x="420.21" y="494.5" width="1.7" height="0.9" fill="#3cb44a"/>
<rect x="422.89" y="493.3" width="1.7" height="2.1" fill="#e05a5a"/>
<rect x="425.58" y="491.9" width="1.7" height="3.5" fill="#e05a5a"/>
<rect x="428.27" y="493.5" width="1.7" height="1.9" fill="#e05a5a"/>
<rect x="430.95" y="493.5" width="1.7" height="1.9" fill="#e05a5a"/>
<rect x="433.64" y="494.1" width="1.7" height="1.3" fill="#e05a5a"/>
<rect x="436.33" y="494.0" width="1.7" height="1.4" fill="#e05a5a"/>
<rect x="439.01" y="494.1" width="1.7" height="1.3" fill="#e05a5a"/>
<rect x="441.70" y="495.1" width="1.7" height="0.3" fill="#3cb44a"/>
<rect x="444.39" y="494.6" width="1.7" height="0.8" fill="#3cb44a"/>
<rect x="447.07" y="495.4" width="1.7" height="0.0" fill="#e05a5a"/>
<rect x="449.76" y="494.6" width="1.7" height="0.8" fill="#3cb44a"/>
<rect x="452.45" y="494.9" width="1.7" height="0.5" fill="#e05a5a"/>
<rect x="455.13" y="495.1" width="1.7" height="0.3" fill="#e05a5a"/>
<rect x="457.82" y="494.8" width="1.7" height="0.6" fill="#3cb44a"/>
<rect x="460.51" y="495.1" width="1.7" height="0.3" fill="#e05a5a"/>
<rect x="463.19" y="495.0" width="1.7" height="0.4" fill="#e05a5a"/>
<rect x="465.88" y="495.4" width="1.7" height="0.0" fill="#3cb44a"/>
<rect x="468.57" y="494.4" width="1.7" height="1.0" fill="#3cb44a"/>
<rect x="471.25" y="486.9" width="1.7" height="8.5" fill="#3cb44a"/>
<rect x="473.94" y="494.6" width="1.7" height="0.8" fill="#e05a5a"/>
<rect x="476.63" y="494.6" width="1.7" height="0.8" fill="#3cb44a"/>
<rect x="479.31" y="495.0" width="1.7" height="0.4" fill="#3cb44a"/>
<rect x="482.00" y="495.4" width="1.7" height="0.0" fill="#e05a5a"/>
<rect x="484.69" y="495.4" width="1.7" height="0.0" fill="#3cb44a"/>
<rect x="487.37" y="494.4" width="1.7" height="1.0" fill="#3cb44a"/>
<rect x="490.06" y="495.4" width="1.7" height="0.0" fill="#3cb44a"/>
<rect x="492.75" y="494.2" width="1.7" height="1.2" fill="#e05a5a"/>
<rect x="495.43" y="494.2" width="1.7" height="1.2" fill="#e05a5a"/>
<rect x="498.12" y="495.4" width="1.7" height="0.0" fill="#e05a5a"/>
<rect x="500.81" y="495.0" width="1.7" height="0.4" fill="#e05a5a"/>
<rect x="503.49" y="495.4" width="1.7" height="0.0" fill="#3cb44a"/>
<rect x="506.18" y="494.9" width="1.7" height="0.5" fill="#3cb44a"/>
<rect x="508.87" y="495.1" width="1.7" height="0.3" fill="#3cb44a"/>
<rect x="511.55" y="495.1" width="1.7" height="0.3" fill="#e05a5a"/>
<rect x="514.24" y="494.9" width="1.7" height="0.5" fill="#3cb44a"/>
<rect x="516.93" y="491.9" width="1.7" height="3.5" fill="#e05a5a"/>
<rect x="519.61" y="494.4" width="1.7" height="1.0" fill="#e05a5a"/>
<rect x="522.30" y="495.4" width="1.7" height="0.0" fill="#3cb44a"/>
<rect x="524.98" y="491.9" width="1.7" height="3.5" fill="#e05a5a"/>
<rect x="527.67" y="495.4" width="1.7" height="0.0" fill="#3cb44a"/>
<rect x="530.36" y="495.4" width="1.7" height="0.0" fill="#e05a5a"/>
<rect x="533.04" y="494.9" width="1.7" height="0.5" fill="#3cb44a"/>
<rect x="535.73" y="495.0" width="1.7" height="0.4" fill="#3cb44a"/>
<rect x="538.42" y="495.4" width="1.7" height="0.0" fill="#3cb44a"/>
<rect x="541.10" y="494.8" width="1.7" height="0.6" fill="#e05a5a"/>
<rect x="543.79" y="491.9" width="1.7" height="3.5" fill="#3cb44a"/>
<rect x="546.48" y="494.9" width="1.7" height="0.5" fill="#e05a5a"/>
<rect x="549.16" y="491.9" width="1.7" height="3.5" fill="#3cb44a"/>
<rect x="551.85" y="495.0" width="1.7" height="0.4" fill="#e05a5a"/>
<rect x="554.54" y="495.1" width="1.7" height="0.3" fill="#3cb44a"/>
<rect x="557.22" y="495.1" width="1.7" height="0.3" fill="#3cb44a"/>
<rect x="559.91" y="494.9" width="1.7" height="0.5" fill="#e05a5a"/>
<rect x="562.60" y="494.2" width="1.7" height="1.2" fill="#e05a5a"/>
<rect x="565.28" y="494.9" width="1.7" height="0.5" fill="#3cb44a"/>
<rect x="567.97" y="495.1" width="1.7" height="0.3" fill="#3cb44a"/>
<rect x="570.66" y="492.4" width="1.7" height="3.0" fill="#3cb44a"/>
<rect x="573.34" y="495.4" width="1.7" height="0.0" fill="#3cb44a"/>
<rect x="576.03" y="494.2" width="1.7" height="1.2" fill="#e05a5a"/>
<rect x="578.72" y="495.0" width="1.7" height="0.4" fill="#e05a5a"/>
<rect x="581.40" y="492.4" width="1.7" height="3.0" fill="#e05a5a"/>
<rect x="584.09" y="495.4" width="1.7" height="0.0" fill="#e05a5a"/>
<rect x="586.78" y="494.6" width="1.7" height="0.8" fill="#e05a5a"/>
<rect x="589.46" y="488.9" width="1.7" height="6.5" fill="#3cb44a"/>
<rect x="592.15" y="494.6" width="1.7" height="0.8" fill="#e05a5a"/>
<rect x="594.84" y="494.9" width="1.7" height="0.5" fill="#e05a5a"/>
<rect x="597.52" y="489.9" width="1.7" height="5.5" fill="#e05a5a"/>
<rect x="600.21" y="495.1" width="1.7" height="0.3" fill="#3cb44a"/>
<rect x="602.90" y="493.4" width="1.7" height="2.0" fill="#e05a5a"/>
<rect x="605.58" y="495.1" width="1.7" height="0.3" fill="#3cb44a"/>
<rect x="608.27" y="494.9" width="1.7" height="0.5" fill="#3cb44a"/>
<rect x="610.96" y="495.4" width="1.7" height="0.0" fill="#3cb44a"/>
<rect x="613.64" y="494.6" width="1.7" height="0.8" fill="#e05a5a"/>
<rect x="616.33" y="494.9" width="1.7" height="0.5" fill="#e05a5a"/>
<rect x="619.02" y="494.9" width="1.7" height="0.5" fill="#3cb44a"/>
<rect x="621.70" y="495.1" width="1.7" height="0.3" fill="#3cb44a"/>
<rect x="624.39" y="494.4" width="1.7" height="1.0" fill="#3cb44a"/>
<rect x="627.08" y="494.8" width="1.7" height="0.6" fill="#e05a5a"/>
<rect x="629.76" y="494.2" width="1.7" height="1.2" fill="#3cb44a"/>
<rect x="632.45" y="495.4" width="1.7" height="0.0" fill="#e05a5a"/>
<rect x="635.14" y="494.9" width="1.7" height="0.5" fill="#3cb44a"/>
<rect x="637.82" y="495.1" width="1.7" height="0.3" fill="#3cb44a"/>
<rect x="640.51" y="493.7" width="1.7" height="1.7" fill="#3cb44a"/>
<rect x="643.20" y="494.0" width="1.7" height="1.4" fill="#e05a5a"/>
<rect x="645.88" y="487.4" width="1.7" height="8.0" fill="#e05a5a"/>
<rect x="648.57" y="494.5" width="1.7" height="0.9" fill="#3cb44a"/>
<rect x="651.26" y="486.9" width="1.7" height="8.5" fill="#e05a5a"/>
<rect x="653.94" y="491.9" width="1.7" height="3.5" fill="#3cb44a"/>
<rect x="656.63" y="494.0" width="1.7" height="1.4" fill="#3cb44a"/>
<rect x="659.32" y="494.1" width="1.7" height="1.3" fill="#3cb44a"/>
<rect x="662.00" y="493.3" width="1.7" height="2.1" fill="#e05a5a"/>
<rect x="664.69" y="494.2" width="1.7" height="1.2" fill="#e05a5a"/>
<rect x="667.38" y="493.7" width="1.7" height="1.7" fill="#e05a5a"/>
<rect x="670.06" y="493.5" width="1.7" height="1.9" fill="#3cb44a"/>
<rect x="672.75" y="489.9" width="1.7" height="5.5" fill="#3cb44a"/>
<rect x="675.44" y="493.3" width="1.7" height="2.1" fill="#e05a5a"/>
<rect x="678.12" y="493.3" width="1.7" height="2.1" fill="#3cb44a"/>
<rect x="680.81" y="493.3" width="1.7" height="2.1" fill="#e05a5a"/>
<rect x="683.50" y="492.4" width="1.7" height="3.0" fill="#e05a5a"/>
<rect x="686.18" y="494.1" width="1.7" height="1.3" fill="#3cb44a"/>
<rect x="688.87" y="492.9" width="1.7" height="2.5" fill="#e05a5a"/>
<rect x="691.56" y="493.9" width="1.7" height="1.5" fill="#e05a5a"/>
<rect x="694.24" y="493.7" width="1.7" height="1.7" fill="#e05a5a"/>
<rect x="696.93" y="493.3" width="1.7" height="2.1" fill="#3cb44a"/>
<rect x="699.62" y="492.4" width="1.7" height="3.0" fill="#e05a5a"/>
<rect x="702.30" y="494.1" width="1.7" height="1.3" fill="#3cb44a"/>
<rect x="704.99" y="494.5" width="1.7" height="0.9" fill="#3cb44a"/>
<rect x="707.68" y="487.4" width="1.7" height="8.0" fill="#3cb44a"/>
<rect x="710.36" y="493.3" width="1.7" height="2.1" fill="#e05a5a"/>
<rect x="713.05" y="492.4" width="1.7" height="3.0" fill="#e05a5a"/>
<rect x="715.74" y="494.5" width="1.7" height="0.9" fill="#e05a5a"/>
<rect x="718.42" y="493.5" width="1.7" height="1.9" fill="#3cb44a"/>
<rect x="721.11" y="492.9" width="1.7" height="2.5" fill="#e05a5a"/>
<rect x="723.79" y="494.1" width="1.7" height="1.3" fill="#e05a5a"/>
<rect x="726.48" y="494.1" width="1.7" height="1.3" fill="#3cb44a"/>
<rect x="729.17" y="493.5" width="1.7" height="1.9" fill="#3cb44a"/>
<rect x="731.85" y="478.4" width="1.7" height="17.0" fill="#e05a5a"/>
<rect x="734.54" y="483.4" width="1.7" height="12.0" fill="#e05a5a"/>
<rect x="737.23" y="487.4" width="1.7" height="8.0" fill="#e05a5a"/>
<rect x="739.91" y="490.4" width="1.7" height="5.0" fill="#e05a5a"/>
<rect x="742.60" y="494.0" width="1.7" height="1.4" fill="#e05a5a"/>
<rect x="745.29" y="492.4" width="1.7" height="3.0" fill="#3cb44a"/>
<rect x="747.97" y="494.5" width="1.7" height="0.9" fill="#3cb44a"/>
<rect x="750.66" y="490.9" width="1.7" height="4.5" fill="#3cb44a"/>
<rect x="753.35" y="493.5" width="1.7" height="1.9" fill="#3cb44a"/>
<rect x="756.03" y="488.4" width="1.7" height="7.0" fill="#e05a5a"/>
<rect x="758.72" y="493.5" width="1.7" height="1.9" fill="#3cb44a"/>
<rect x="761.41" y="492.4" width="1.7" height="3.0" fill="#3cb44a"/>
<rect x="764.09" y="492.4" width="1.7" height="3.0" fill="#e05a5a"/>
<rect x="766.78" y="494.5" width="1.7" height="0.9" fill="#e05a5a"/>
<rect x="769.47" y="492.4" width="1.7" height="3.0" fill="#3cb44a"/>
<rect x="772.15" y="494.5" width="1.7" height="0.9" fill="#e05a5a"/>
<rect x="774.84" y="490.4" width="1.7" height="5.0" fill="#3cb44a"/>
<rect x="777.53" y="493.7" width="1.7" height="1.7" fill="#3cb44a"/>
<rect x="780.21" y="494.1" width="1.7" height="1.3" fill="#3cb44a"/>
<rect x="782.90" y="492.4" width="1.7" height="3.0" fill="#e05a5a"/>
<rect x="785.59" y="493.3" width="1.7" height="2.1" fill="#3cb44a"/>
<rect x="788.27" y="493.9" width="1.7" height="1.5" fill="#3cb44a"/>
<rect x="790.96" y="493.3" width="1.7" height="2.1" fill="#3cb44a"/>
<rect x="793.65" y="494.5" width="1.7" height="0.9" fill="#e05a5a"/>
<rect x="796.33" y="488.9" width="1.7" height="6.5" fill="#e05a5a"/>
<rect x="799.02" y="492.4" width="1.7" height="3.0" fill="#e05a5a"/>
<rect x="801.71" y="494.2" width="1.7" height="1.2" fill="#3cb44a"/>
<rect x="804.39" y="493.5" width="1.7" height="1.9" fill="#e05a5a"/>
<rect x="807.08" y="493.7" width="1.7" height="1.7" fill="#3cb44a"/>
<rect x="809.77" y="491.4" width="1.7" height="4.0" fill="#3cb44a"/>
<rect x="812.45" y="492.4" width="1.7" height="3.0" fill="#e05a5a"/>
<rect x="815.14" y="493.9" width="1.7" height="1.5" fill="#3cb44a"/>
<rect x="817.83" y="493.9" width="1.7" height="1.5" fill="#e05a5a"/>
<rect x="820.51" y="494.5" width="1.7" height="0.9" fill="#e05a5a"/>
<rect x="823.20" y="492.4" width="1.7" height="3.0" fill="#3cb44a"/>
<rect x="19.4" y="477" width="61.6" height="10.2" fill="#b3c9f6" stroke="#7c9ce4" stroke-width="0.6"/>
<rect x="21.4" y="479" width="2.8" height="6" fill="#3fb84c"/><rect x="24.2" y="479" width="2.8" height="6" fill="#e06060"/>
<text x="29" y="484.4" font-size="6.6" fill="#0a1430" textLength="21.5" lengthAdjust="spacingAndGlyphs" stroke="#0a1430" stroke-width="0.2">Volume</text><text x="54.4" y="484.4" font-size="6.6" fill="#e86a6a" textLength="20.0" lengthAdjust="spacingAndGlyphs" stroke="#e86a6a" stroke-width="0.12">56,707</text>
<text x="855" y="487.1" font-size="6.6" fill="#111" textLength="25.2" lengthAdjust="spacingAndGlyphs">500 000</text>
<rect x="853.1" y="486.5" width="27" height="8" fill="#fff" stroke="#5a80cc" stroke-width="0.6"/><text x="855.2" y="493" font-size="6.4" fill="#3cb44a" stroke="#3cb44a" stroke-width="0.1" textLength="23.4" lengthAdjust="spacingAndGlyphs">188,881</text>
<rect x="850.6" y="490.6" width="2.6" height="0.7" fill="#3cb44a"/>
<text x="45" y="503.4" font-size="6.5" fill="#111" stroke="#111" stroke-width="0.15" text-anchor="middle">Nov</text>
<rect x="44.7" y="495.6" width="0.6" height="1.6" fill="#5a80cc"/>
<text x="101" y="503.4" font-size="6.5" fill="#111" stroke="#111" stroke-width="0.15" text-anchor="middle">Dec</text>
<rect x="100.7" y="495.6" width="0.6" height="1.6" fill="#5a80cc"/>
<text x="213.5" y="503.4" font-size="6.5" fill="#111" stroke="#111" stroke-width="0.15" text-anchor="middle">Feb</text>
<rect x="213.2" y="495.6" width="0.6" height="1.6" fill="#5a80cc"/>
<text x="268" y="503.4" font-size="6.5" fill="#111" stroke="#111" stroke-width="0.15" text-anchor="middle">Mar</text>
<rect x="267.7" y="495.6" width="0.6" height="1.6" fill="#5a80cc"/>
<text x="325" y="503.4" font-size="6.5" fill="#111" stroke="#111" stroke-width="0.15" text-anchor="middle">Apr</text>
<rect x="324.7" y="495.6" width="0.6" height="1.6" fill="#5a80cc"/>
<text x="378.5" y="503.4" font-size="6.5" fill="#111" stroke="#111" stroke-width="0.15" text-anchor="middle">May</text>
<rect x="378.2" y="495.6" width="0.6" height="1.6" fill="#5a80cc"/>
<text x="435.5" y="503.4" font-size="6.5" fill="#111" stroke="#111" stroke-width="0.15" text-anchor="middle">Jun</text>
<rect x="435.2" y="495.6" width="0.6" height="1.6" fill="#5a80cc"/>
<text x="491.5" y="503.4" font-size="6.5" fill="#111" stroke="#111" stroke-width="0.15" text-anchor="middle">Jul</text>
<rect x="491.2" y="495.6" width="0.6" height="1.6" fill="#5a80cc"/>
<text x="553" y="503.4" font-size="6.5" fill="#111" stroke="#111" stroke-width="0.15" text-anchor="middle">Aug</text>
<rect x="552.7" y="495.6" width="0.6" height="1.6" fill="#5a80cc"/>
<text x="609.5" y="503.4" font-size="6.5" fill="#111" stroke="#111" stroke-width="0.15" text-anchor="middle">Sept</text>
<rect x="609.2" y="495.6" width="0.6" height="1.6" fill="#5a80cc"/>
<text x="669.5" y="503.4" font-size="6.5" fill="#111" stroke="#111" stroke-width="0.15" text-anchor="middle">Oct</text>
<rect x="669.2" y="495.6" width="0.6" height="1.6" fill="#5a80cc"/>
<text x="730" y="503.4" font-size="6.5" fill="#111" stroke="#111" stroke-width="0.15" text-anchor="middle">Nov</text>
<rect x="729.7" y="495.6" width="0.6" height="1.6" fill="#5a80cc"/>
<text x="783.5" y="503.4" font-size="6.5" fill="#111" stroke="#111" stroke-width="0.15" text-anchor="middle">Dec</text>
<rect x="783.2" y="495.6" width="0.6" height="1.6" fill="#5a80cc"/>
<text x="840.2" y="503.8" font-size="7.2" class="b" fill="#111" text-anchor="middle" textLength="16.4" lengthAdjust="spacingAndGlyphs">2026</text>
<rect x="137.4" y="497" width="43" height="8" fill="#f4f000"/><text x="158.9" y="503.4" font-size="6.5" fill="#111" stroke="#111" stroke-width="0.15" text-anchor="middle" textLength="41.2" lengthAdjust="spacingAndGlyphs">Fri 3 Jan 2025</text>
<rect x="878.9" y="38.5" width="1.1" height="467" fill="#b9cdf4"/>
<rect x="0" y="38.5" width="18.9" height="467" fill="#6598fc"/><rect x="0" y="38.5" width="1" height="467" fill="#4274dc"/><g transform="translate(9.8,47.5) rotate(-45)"><rect x="-6" y="-2.2" width="12" height="4.4" fill="#7da3f6" stroke="#2f3f9a" stroke-width="0.8"/><path d="M-3 -2v1.6M-1 -2v1.6M1 -2v1.6M3 -2v1.6" stroke="#3c50b4" stroke-width="0.5"/></g><g stroke="#15203c" stroke-width="0.95" fill="none"><circle cx="5.9" cy="63.6" r="1.35"/><circle cx="13.3" cy="63.6" r="1.35"/><path d="M7.3 63.6h4.6"/></g><g stroke="#15203c" stroke-width="0.95" fill="none"><circle cx="6.4" cy="81.2" r="1.35"/><circle cx="12.6" cy="75.4" r="1.35"/><path d="M7.4 80.2 l4.2 -3.8"/></g><path d="M3.6 94.5h12.2" stroke="#15203c" stroke-width="0.95"/><g stroke="#15203c" stroke-width="0.85" fill="none"><path d="M4.4 108.6 l10.4 -3"/><path d="M4.8 113.2 l10.4 -3"/></g><path d="M10 107.8 v4" stroke="#1a3be0" stroke-width="0.85"/><path d="M3.2 113.6 l2.4 -1.4 v2.4z M16.6 109.8 l-2.4 -1.2 v2.4z" fill="#1a3be0"/><g stroke="#e82030" stroke-width="1.05" fill="none"><circle cx="6.4" cy="128.6" r="1.2"/><path d="M7.3 127.7 l4.8 -4.8"/></g><path d="M13.8 121.2 l-3.6 0.8 l2.8 2.8z" fill="#e82030"/><g stroke="#14923a" stroke-width="1.05" fill="none"><circle cx="9.8" cy="145" r="1.2"/><path d="M9.8 143.8 v-4.6"/></g><path d="M9.8 136.8 l-1.9 2.8 h3.8z" fill="#14923a"/><g stroke="#14923a" stroke-width="1.05" fill="none"><circle cx="6.4" cy="160.2" r="1.2"/><path d="M7.3 159.3 l4.8 -4.8"/></g><path d="M13.8 152.8 l-3.6 0.8 l2.8 2.8z" fill="#14923a"/><rect x="5.6" y="169.4" width="7.4" height="6.6" fill="#2c3040"/><path d="M6.6 171.6h5.4M6.6 173.8h5.4" stroke="#aab" stroke-width="0.85"/><path d="M14 173.6 v4" stroke="#1a3be0" stroke-width="1.05"/><path d="M8.1 184.4 h3.4 v3.8 h2.2 l-3.9 4.4 l-3.9 -4.4 h2.2z" fill="#ee1c24"/><path d="M8.1 208.4 h3.4 v-3.8 h2.2 l-3.9 -4.6 l-3.9 4.6 h2.2z" fill="#25b02f"/><rect x="2.2" y="212" width="15.4" height="15" rx="1" fill="#7595dc"/><path d="M7.6 215.6 v7.4 l1.7 -1.6 l1.2 2.6 l1.1 -0.5 l-1.2 -2.5 h2.3z" fill="#e8e4d0" stroke="#8a8a80" stroke-width="0.4"/><rect x="5" y="230.4" width="9.6" height="9.4" rx="0.8" fill="#6c93ee"/><text x="7.1" y="238.4" font-size="8" class="b" fill="#0a0a14">T</text><ellipse cx="9.8" cy="250.6" rx="5.2" ry="3.4" fill="none" stroke="#15203c" stroke-width="1.05" transform="rotate(-12 9.8 250.6)"/><path d="M3.6 253.6 l2 -0.4 l-1.2 1.8z M16 246.4 l-2 0.8 l1.6 1.2z" fill="#1a3be0"/><path d="M6.5 264 h6.6 l-0.7 6.6 h-5.2z" fill="#d8d4c4" stroke="#5a5648" stroke-width="0.5"/><path d="M8.3 264.6v5.4M9.8 264.6v5.4M11.3 264.6v5.4" stroke="#6a6658" stroke-width="0.5"/><ellipse cx="9.8" cy="263.4" rx="3.8" ry="1.2" fill="#c8c4b4" stroke="#4a463a" stroke-width="0.5"/><path d="M5.9 284 q1.2 -1 1.2 -3.4 q0 -3 2.7 -3 q2.7 0 2.7 3 q0 2.4 1.2 3.4z" fill="#f4d21c" stroke="#c8a000" stroke-width="0.4"/><circle cx="9.8" cy="285" r="1" fill="#e0b800"/><path d="M4.9 277.4l1.4 1.6M14.7 277.4l-1.4 1.6" stroke="#8a7a40" stroke-width="0.5"/><rect x="0" y="467.6" width="19.4" height="0.8" fill="#4a7adc"/><rect x="7.4" y="472.6" width="5.6" height="7" fill="#f2f2f2" stroke="#666" stroke-width="0.4"/><path d="M11 472.6 l2 2 h-2z" fill="#aaa"/><rect x="6.2" y="476.6" width="4.6" height="4.8" fill="#e6ecf8" stroke="#223" stroke-width="0.5"/><path d="M7 478h3M7 479.6h3" stroke="#223" stroke-width="0.5"/><path d="M10.6 481.4 l5.2 -3.4 M12 483 l4 -1.6" stroke="#1a2a4a" stroke-width="1"/><path d="M15.2 476.6 l2 1.2 l-2.2 1z" fill="#1a2a4a"/><circle cx="6.2" cy="472.6" r="2.6" fill="#1ca632"/><text x="5" y="474.4" font-size="4.4" class="b" fill="#fff">1</text><path d="M13 483.4 l1.7 1.7 l1.7 -1.7z" fill="#111"/><circle cx="6" cy="495.4" r="1" fill="#111"/><circle cx="9.2" cy="495.4" r="1" fill="#111"/><circle cx="12.4" cy="495.4" r="1" fill="#111"/><path d="M10.6 499.2 l1.8 1.8 l1.8 -1.8z" fill="#111"/>
<rect x="19.4" y="38.6" width="248.2" height="10.2" fill="#b3c9f6" stroke="#7c9ce4" stroke-width="0.6"/><rect x="39.1" y="38.6" width="0.7" height="10.2" fill="#7c9ce4"/><rect x="84.10000000000001" y="38.6" width="0.7" height="10.2" fill="#7c9ce4"/><rect x="95.3" y="38.6" width="0.7" height="10.2" fill="#7c9ce4"/><rect x="162.89999999999998" y="38.6" width="0.7" height="10.2" fill="#7c9ce4"/><rect x="202.7" y="38.6" width="0.7" height="10.2" fill="#7c9ce4"/><rect x="21.8" y="40.2" width="6" height="6.8" fill="#f2f4fa" stroke="#9ab" stroke-width="0.3"/><path d="M24 41 h1.6 v2 h1.5 l-2.3 2.8 l-2.3 -2.8 h1.5z" fill="#e01c24"/><rect x="30.8" y="40.2" width="6.4" height="6.8" fill="#f2f4fa" stroke="#9ab" stroke-width="0.3"/><path d="M33.2 46.2 h1.6 v-2 h1.7 l-2.5 -3 l-2.5 3 h1.7z" fill="#18a828"/><rect x="41.9" y="40.7" width="3.1" height="6" fill="#3fb84c"/><rect x="45" y="40.7" width="3.1" height="6" fill="#e06060"/><text x="50" y="45.9" font-size="6.6" fill="#0a1430" textLength="14.4" lengthAdjust="spacingAndGlyphs" stroke="#0a1430" stroke-width="0.2">Price</text><text x="68.6" y="45.9" font-size="6.6" fill="#0a1430" textLength="12.2" lengthAdjust="spacingAndGlyphs" stroke="#0a1430" stroke-width="0.2">7.68</text><g stroke="#15203c" stroke-width="0.8"><path d="M89.4 41.8h3.6M89.4 43.7h3.6M89.4 45.6h3.6"/><path d="M87.6 41.8h0.9M87.6 43.7h0.9M87.6 45.6h0.9"/></g><rect x="98.1" y="40.7" width="6.2" height="6" fill="#f43030"/><text x="106.2" y="45.9" font-size="6.6" fill="#0a1430" textLength="30.6" lengthAdjust="spacingAndGlyphs" stroke="#0a1430" stroke-width="0.2">EMA (200)</text><text x="140.6" y="45.9" font-size="6.6" fill="#f03c3c" textLength="20.0" lengthAdjust="spacingAndGlyphs" stroke="#f03c3c" stroke-width="0.15">8.3527</text><rect x="165.8" y="40.9" width="5.4" height="5.6" fill="#dfe8fa" stroke="#9ab0d8" stroke-width="0.4"/><text x="173.7" y="45.9" font-size="6.6" fill="#0a1430" textLength="26.9" lengthAdjust="spacingAndGlyphs" stroke="#0a1430" stroke-width="0.2">EMA (14)</text><rect x="206" y="40.7" width="6" height="6" fill="#2040e0"/><text x="214" y="45.9" font-size="6.6" fill="#0a1430" textLength="27.5" lengthAdjust="spacingAndGlyphs" stroke="#0a1430" stroke-width="0.2">SMA (50)</text><text x="245" y="45.9" font-size="6.6" fill="#3450e0" textLength="20.0" lengthAdjust="spacingAndGlyphs" stroke="#3450e0" stroke-width="0.15">7.8540</text><defs>
<linearGradient id="g2" x1="0" y1="0" x2="0" y2="1"><stop offset="0" stop-color="#86b0ff"/><stop offset="0.5" stop-color="#76a4fb"/><stop offset="1" stop-color="#6496f4"/></linearGradient>
<linearGradient id="g1" x1="0" y1="0" x2="0" y2="1"><stop offset="0" stop-color="#6699fd"/><stop offset="1" stop-color="#6497fa"/></linearGradient>
</defs>
<rect x="0" y="0" width="880" height="23.5" fill="url(#g1)"/>
<rect x="0" y="0" width="880" height="1" fill="#3d66cc"/>
<rect x="0" y="22.3" width="880" height="1.3" fill="#3f6ccc"/>
<rect x="1" y="1" width="67" height="21.2" fill="#000"/>
<rect x="6.9" y="10.8" width="1.9" height="4.799999999999999" fill="#3f9bd4"/>
<rect x="9.8" y="8.8" width="1.9" height="5.0" fill="#3f9bd4"/>
<rect x="12.6" y="6.9" width="1.9" height="5.5" fill="#3f9bd4"/>
<text x="20.5" y="10.4" font-size="6.6" class="b" fill="#fff" textLength="40.6" lengthAdjust="spacingAndGlyphs" stroke="#fff" stroke-width="0.15">ProRealTime</text>
<text x="20.5" y="17.8" font-size="6.0" fill="#a9c4e4" textLength="25.6" lengthAdjust="spacingAndGlyphs" stroke="#a9c4e4" stroke-width="0.1">Complete</text>
<text x="75.5" y="13.7" font-size="6.7" fill="#0a1430" textLength="10.0" lengthAdjust="spacingAndGlyphs" stroke="#0a1430" stroke-width="0.22">File</text>
<text x="94" y="13.7" font-size="6.7" fill="#0a1430" textLength="21.3" lengthAdjust="spacingAndGlyphs" stroke="#0a1430" stroke-width="0.22">Display</text>
<text x="122.5" y="13.7" font-size="6.7" fill="#0a1430" textLength="21.3" lengthAdjust="spacingAndGlyphs" stroke="#0a1430" stroke-width="0.22">Trading</text>
<text x="152" y="13.7" font-size="6.7" fill="#0a1430" textLength="17.5" lengthAdjust="spacingAndGlyphs" stroke="#0a1430" stroke-width="0.22">Social</text>
<text x="177.5" y="13.7" font-size="6.7" fill="#0a1430" textLength="22.0" lengthAdjust="spacingAndGlyphs" stroke="#0a1430" stroke-width="0.22">Objects</text>
<text x="208.5" y="13.7" font-size="6.7" fill="#0a1430" textLength="23.1" lengthAdjust="spacingAndGlyphs" stroke="#0a1430" stroke-width="0.22">Settings</text>
<text x="252.7" y="13.7" font-size="6.7" fill="#0a1430" textLength="13.3" lengthAdjust="spacingAndGlyphs" stroke="#0a1430" stroke-width="0.22">Help</text>
<rect x="235.5" y="1" width="0.8" height="21" fill="#4a78d6"/>
<rect x="268.5" y="1" width="0.8" height="21" fill="#4a78d6"/>
<rect x="395.5" y="1" width="0.8" height="21" fill="#4a78d6"/>
<g fill="none" stroke="#15203c" stroke-width="1"><path d="M240 12.5 v-1.7 a4.2 4.2 0 0 1 8.4 0 v1.7"/><path d="M248.4 13.4 q0 2.8 -3.4 2.9"/></g>
<rect x="239" y="10.6" width="1.9" height="3.6" rx="0.8" fill="#15203c"/><rect x="247.5" y="10.6" width="1.9" height="3.6" rx="0.8" fill="#15203c"/><circle cx="244.6" cy="16.3" r="0.8" fill="#15203c"/>
<g fill="none" stroke="#f4f4f4" stroke-width="1.3"><rect x="275.1" y="6.2" width="4.2" height="5" rx="1.9"/><rect x="275.1" y="11.6" width="4.2" height="5" rx="1.9"/></g>
<rect x="276.7" y="9" width="1" height="5" fill="#555"/>
<rect x="286" y="3" width="105.5" height="15.8" rx="1.6" fill="#fff"/>
<text x="288.5" y="13.6" font-size="6.3" font-style="italic" fill="#9a9a9a">Search...</text>
<circle cx="387.3" cy="9.6" r="2.6" fill="none" stroke="#222" stroke-width="0.8"/><path d="M385.4 11.6 L382.4 14.6" stroke="#222" stroke-width="1.2"/>
<g transform="translate(406.5,11.2) rotate(-45)"><rect x="-6" y="-2.2" width="12" height="4.4" fill="#7da3f6" stroke="#2f3f9a" stroke-width="0.8"/><path d="M-3 -1.9v1.6M-1 -1.9v1.6M1 -1.9v1.6M3 -1.9v1.6" stroke="#3c50b4" stroke-width="0.5"/></g><g stroke="#15203c" stroke-width="0.95" fill="none"><circle cx="419.2" cy="11.6" r="1.35"/><circle cx="426.6" cy="11.6" r="1.35"/><path d="M420.6 11.6h4.6"/></g><g stroke="#15203c" stroke-width="0.95" fill="none"><circle cx="435.8" cy="14.3" r="1.35"/><circle cx="441.6" cy="8.8" r="1.35"/><path d="M436.8 13.3 l3.8 -3.6"/></g><path d="M447.5 11.6h12.5" stroke="#15203c" stroke-width="0.95"/><g stroke="#15203c" stroke-width="0.85" fill="none"><path d="M464 10.8 l10.5 -3"/><path d="M464.5 15.4 l10.5 -3"/></g><path d="M469.8 10 v4" stroke="#1a3be0" stroke-width="0.85"/><path d="M463 15.8 l2.4 -1.4 v2.4z M476.6 12 l-2.4 -1.2 v2.4z" fill="#1a3be0"/><g stroke="#e82030" stroke-width="1.05" fill="none"><circle cx="482.6" cy="14.4" r="1.2"/><path d="M483.5 13.5 l4.8 -4.8"/></g><path d="M489.8 7.2 l-3.6 0.8 l2.8 2.8z" fill="#e82030"/><g stroke="#14923a" stroke-width="1.05" fill="none"><circle cx="500.8" cy="14.8" r="1.2"/><path d="M500.8 13.6 v-4.6"/></g><path d="M500.8 6.8 l-1.9 2.8 h3.8z" fill="#14923a"/><g stroke="#14923a" stroke-width="1.05" fill="none"><circle cx="513.6" cy="14.4" r="1.2"/><path d="M514.5 13.5 l4.8 -4.8"/></g><path d="M520.8 7.2 l-3.6 0.8 l2.8 2.8z" fill="#14923a"/><rect x="528.2" y="7.8" width="7.4" height="6.6" fill="#2c3040"/><path d="M529.2 10h5.4M529.2 12.2h5.4" stroke="#aab" stroke-width="0.85"/><path d="M536.6 12 v4" stroke="#1a3be0" stroke-width="1.05"/><path d="M545.4 7 h3.4 v3.8 h2.2 l-3.9 4.4 l-3.9 -4.4 h2.2z" fill="#ee1c24"/><path d="M561.6 15.4 h3.4 v-3.8 h2.2 l-3.9 -4.6 l-3.9 4.6 h2.2z" fill="#25b02f"/><rect x="571.2" y="3.8" width="15" height="14.6" rx="1" fill="#7595dc"/><path d="M577 7.4 v7.4 l1.7 -1.6 l1.2 2.6 l1.1 -0.5 l-1.2 -2.5 h2.3z" fill="#e8e4d0" stroke="#8a8a80" stroke-width="0.4"/><rect x="590" y="6.6" width="9.6" height="9.4" rx="0.8" fill="#6c93ee"/><text x="592" y="14.6" font-size="8" class="b" fill="#0a0a14">T</text><ellipse cx="610.4" cy="11.4" rx="5.2" ry="3.4" fill="none" stroke="#15203c" stroke-width="1.05" transform="rotate(-12 610.4 11.4)"/><path d="M604.2 14.4 l2 -0.4 l-1.2 1.8z M616.6 7.2 l-2 0.8 l1.6 1.2z" fill="#1a3be0"/><path d="M622.6 9 h6.6 l-0.7 6.6 h-5.2z" fill="#d8d4c4" stroke="#5a5648" stroke-width="0.5"/><path d="M624.4 9.6v5.4M625.9 9.6v5.4M627.4 9.6v5.4" stroke="#6a6658" stroke-width="0.5"/><ellipse cx="625.9" cy="8.4" rx="3.8" ry="1.2" fill="#c8c4b4" stroke="#4a463a" stroke-width="0.5"/><path d="M637.4 13.8 q1.2 -1 1.2 -3.4 q0 -3 2.7 -3 q2.7 0 2.7 3 q0 2.4 1.2 3.4z" fill="#f4d21c" stroke="#c8a000" stroke-width="0.4"/><circle cx="641.3" cy="14.8" r="1" fill="#e0b800"/><path d="M636.4 7.2l1.4 1.6M646.2 7.2l-1.4 1.6" stroke="#8a7a40" stroke-width="0.5"/>
<path d="M769.2 6.6 v9" stroke="#c89600" stroke-width="0.8"/><path d="M769.6 6.8 q2 -1 3.8 0 t3.8 0 v4.6 q-2 1 -3.8 0 t-3.8 0z" fill="#f6c81e"/><rect x="772.8" y="12.4" width="7.4" height="5.4" rx="2.6" fill="#d42020"/><text x="774" y="17" font-size="4.6" class="b" fill="#fff">25</text><rect x="797.6" y="8.2" width="6" height="7" fill="#cfe2f8" stroke="#9ab8e4" stroke-width="0.4" transform="rotate(8 800.6 11.7)"/><path d="M796.2 11 a4.6 4.6 0 0 1 7 -3.6" stroke="#2a58d0" stroke-width="1.2" fill="none"/><path d="M794.6 10 l1.6 2.6 l1.8 -2.4z" fill="#2a58d0"/><path d="M805.2 12.6 a4.6 4.6 0 0 1 -7 3.6" stroke="#2a58d0" stroke-width="1.2" fill="none"/><path d="M806.8 13.6 l-1.6 -2.6 l-1.8 2.4z" fill="#2a58d0"/><rect x="814.6" y="7" width="8" height="8.8" fill="#10141c"/><rect x="815.2" y="13.2" width="6.8" height="2.2" fill="#9fc0ee"/><path d="M815.4 9.4h6.4" stroke="#2a3a5a" stroke-width="0.5"/><g stroke="#8aa8e6" stroke-width="0.7" fill="none"><rect x="831.6" y="5.6" width="3.6" height="4.4"/><path d="M832.6 9 l2 -2.4"/><path d="M851.2 7.6 h3.4 M852.6 6.6 l-1.4 1 l1.4 1"/><path d="M860.6 10 h3.4"/><path d="M870.4 5.4 l4.6 4.6 M875 5.4 l-4.6 4.6"/></g><rect x="841" y="4.4" width="6.6" height="2.4" fill="#d8d8d0" stroke="#222" stroke-width="0.4"/><path d="M844.3 6.8 v1.6" stroke="#111" stroke-width="1"/><circle cx="844.3" cy="9.4" r="1.1" fill="#111"/><text x="843.2" y="19.3" font-size="6.4" fill="#22408e" textLength="33.0" lengthAdjust="spacingAndGlyphs" stroke="#22408e" stroke-width="0.1">Tue 23 Dec</text>
<rect x="0" y="23.6" width="880" height="14.6" fill="url(#g2)"/>
<rect x="0" y="37.6" width="880" height="1" fill="#4472d2"/>
<rect x="3.8" y="29.5" width="1.5" height="4.5" fill="#4f9fe0" opacity="0.9"/>
<rect x="6.4" y="28" width="1.5" height="4.5" fill="#4f9fe0" opacity="0.9"/>
<rect x="9" y="26.5" width="1.5" height="5.5" fill="#4f9fe0" opacity="0.9"/>
<rect x="11.6" y="27.5" width="1.5" height="3.0" fill="#4f9fe0" opacity="0.9"/>
<rect x="15.5" y="24" width="0.7" height="13.5" fill="#4a7adc"/>
<rect x="56.5" y="24" width="0.7" height="13.5" fill="#4a7adc"/>
<rect x="88.5" y="24" width="0.7" height="13.5" fill="#4a7adc"/>
<rect x="130.5" y="24" width="0.7" height="13.5" fill="#4a7adc"/>
<rect x="185.5" y="24" width="0.7" height="13.5" fill="#4a7adc"/>
<g fill="none" stroke="#f4f4f4" stroke-width="1"><rect x="20.6" y="26.4" width="3" height="4" rx="1.4"/><rect x="20.6" y="30.4" width="3" height="4" rx="1.4"/></g><rect x="21.6" y="28.6" width="0.9" height="4" fill="#666"/>
<path d="M21.5 34.8 l1.3 1.5 l2.3 -3" stroke="#1c4fd0" stroke-width="1" fill="none"/>
<text x="29.8" y="32.3" font-size="6.5" class="b" fill="#0a1430" textLength="14.0" lengthAdjust="spacingAndGlyphs" stroke="#0a1430" stroke-width="0.18">COR</text><path d="M48.3 29.1 l1.6 1.7 l1.6 -1.7" stroke="#0a1430" stroke-width="1.2" fill="none"/>
<text x="60" y="32.3" font-size="6.5" class="b" fill="#0a1430" textLength="16.3" lengthAdjust="spacingAndGlyphs" stroke="#0a1430" stroke-width="0.18">1 day</text><path d="M81.3 29.1 l1.6 1.7 l1.6 -1.7" stroke="#0a1430" stroke-width="1.2" fill="none"/>
<text x="91.3" y="32.3" font-size="6.5" class="b" fill="#0a1430" textLength="28.3" lengthAdjust="spacingAndGlyphs" stroke="#0a1430" stroke-width="0.18">300 units</text><path d="M124.3 29.1 l1.6 1.7 l1.6 -1.7" stroke="#0a1430" stroke-width="1.2" fill="none"/>
<path d="M135.5 27.6 q2.5 -2.6 5 0.4 t5.5 0.6" stroke="#1fa03a" stroke-width="0.9" fill="none"/>
<path d="M135.5 29.2 q2.5 -1.8 5 1.2 t5.5 -0.4" stroke="#e04040" stroke-width="0.8" fill="none"/>
<rect x="135.8" y="33.8" width="1.5" height="2" fill="#22b24a"/>
<rect x="137.6" y="34.599999999999994" width="1.5" height="1.2" fill="#e33"/>
<rect x="139.2" y="34.199999999999996" width="1.5" height="1.6" fill="#22b24a"/>
<rect x="141" y="34.8" width="1.5" height="1" fill="#e33"/>
<rect x="142.6" y="33.599999999999994" width="1.5" height="2.2" fill="#22b24a"/>
<rect x="144.4" y="33.199999999999996" width="1.5" height="2.6" fill="#22b24a"/>
<text x="149.8" y="32" font-size="7.0" class="b" fill="#0a1430" textLength="31.9" lengthAdjust="spacingAndGlyphs" stroke="#0a1430" stroke-width="0.18">Indicators</text><path d="M188.3 29.1 l1.6 1.7 l1.6 -1.7" stroke="#0a1430" stroke-width="1.2" fill="none"/>
<rect x="199.2" y="27" width="5.6" height="6.8" fill="#f3f1e4" stroke="#c9c6b0" stroke-width="0.4"/><text x="201.2" y="32.9" font-size="5.4" class="b" fill="#b8b49c">i</text>
<text x="209.6" y="32.3" font-size="6.5" fill="#0a1430" textLength="70.0" lengthAdjust="spacingAndGlyphs" stroke="#0a1430" stroke-width="0.2">CORTICEIRA AMORIM</text>
<text x="283" y="32.3" font-size="6.5" class="b" fill="#149c2c" stroke="#149c2c" stroke-width="0.15" textLength="12.5" lengthAdjust="spacingAndGlyphs">6.61</text>
<rect x="299.6" y="26" width="26.6" height="9.3" fill="#3ec84a"/>
<text x="301.8" y="32.9" font-size="6.6" fill="#e8ffe8" textLength="23.0" lengthAdjust="spacingAndGlyphs" stroke="#e8ffe8" stroke-width="0.1">+0.61%</text>
<text x="329" y="32.3" font-size="6.6" class="b" fill="#0a1430" textLength="37.9" lengthAdjust="spacingAndGlyphs" stroke="#0a1430" stroke-width="0.15">22 Dec 2025</text>
<circle cx="374.3" cy="30.1" r="2.1" fill="#dfe6f2" stroke="#b8c4da" stroke-width="0.6"/>
<rect x="832" y="24" width="0.7" height="13.5" fill="#4a7adc"/><rect x="847.5" y="24" width="0.7" height="13.5" fill="#4a7adc"/>
<path d="M835.2 30.6 a4 4 0 0 1 6.6 -3.6" stroke="#ee2c34" stroke-width="1.5" fill="none"/><path d="M833.6 29.6 l1.8 3.2 l2 -2.8z" fill="#ee2c34"/>
<path d="M845.4 30.2 a4 4 0 0 1 -6.6 3.8" stroke="#1cb23c" stroke-width="1.5" fill="none"/><path d="M847 31.4 l-1.8 -3.4 l-2.2 3z" fill="#1cb23c"/>
<g stroke="#b4c8f0" stroke-width="0.9" fill="none"><path d="M851.5 33.5 h4"/><rect x="860.5" y="29.5" width="3.6" height="3.6"/><path d="M862 29.5 v-1.5 h3.6 v3.6 h-1.5"/><path d="M870 27.6 l5 5 M875 27.6 l-5 5"/></g><defs><linearGradient id="tb" x1="0" y1="0" x2="1" y2="0"><stop offset="0" stop-color="#e8e9e5"/><stop offset="0.25" stop-color="#efeeeb"/><stop offset="0.5" stop-color="#f3e7e6"/><stop offset="0.8" stop-color="#f3e4e6"/><stop offset="1" stop-color="#efe9ec"/></linearGradient>
<linearGradient id="th" x1="0" y1="0" x2="0" y2="1"><stop offset="0" stop-color="#8bb5fa"/><stop offset="1" stop-color="#6797ee"/></linearGradient></defs>
<rect x="0" y="505.2" width="880" height="15.6" fill="#6396fa"/>
<rect x="0" y="505.2" width="880" height="0.9" fill="#4a7ce0"/>
<rect x="0" y="520" width="880" height="1" fill="#4068c4"/>
<rect x="0" y="506" width="19" height="14" fill="#5079d2"/>
<path d="M4.6 516.6 l2.4 -8 l2.4 8" stroke="#c03030" stroke-width="0.7" fill="none"/><path d="M5 517.6 l7 -7.4" stroke="#1c8c30" stroke-width="0.8"/><path d="M8.6 517.4 l5 -8.2 l1.8 1 l-5 8.2z" fill="#f6d020" stroke="#a88a00" stroke-width="0.3"/><path d="M8.6 517.4 l0.2 1.6 l1.6 -0.6z" fill="#333"/>
<g stroke="#f4f4f4" stroke-width="0.9" fill="#f4f4f4"><path d="M22.8 513 l5.2 -3.2 M22.8 513 l5.2 3.2" fill="none"/><circle cx="22.6" cy="513" r="1.5"/><circle cx="28.2" cy="509.6" r="1.5"/><circle cx="28.2" cy="516.4" r="1.5"/></g><path d="M28.6 517.6 l1.6 1.6 l1.6 -1.6z" fill="#111"/>
<rect x="34.4" y="506.2" width="40.6" height="14" fill="#f2f3f5"/>
<rect x="36.6" y="507.8" width="11" height="11" fill="#233f86"/><rect x="39.6" y="508.8" width="5" height="9" fill="#f4f6fa"/><rect x="44.6" y="507.8" width="3" height="11" fill="#8d929c"/><rect x="36.6" y="507.8" width="2" height="11" fill="#1a2f66"/>
<text x="51" y="515.9" font-size="6.6" fill="#111" textLength="22.5" lengthAdjust="spacingAndGlyphs" stroke="#111" stroke-width="0.15">Analyze</text>
<rect x="79.6" y="508.4" width="4.4" height="5.8" fill="#eef2fa" stroke="#9ab" stroke-width="0.3"/><rect x="81.6" y="511" width="6" height="4.6" rx="0.8" fill="#3c78e0"/><path d="M83 515.4 v1.6 l1.6 -1.6z" fill="#3c78e0"/>
<rect x="93.2" y="508.2" width="6.4" height="5.4" fill="#f4f8ff" stroke="#2a58c0" stroke-width="0.6"/><rect x="96.4" y="511.6" width="7.2" height="6" fill="#fff" stroke="#2a58c0" stroke-width="0.6"/><path d="M97.2 516.6 l1.6 -3 l1.4 2.4 l1.8 -3" stroke="#e03030" stroke-width="0.6" fill="none"/><path d="M94 510.2 l1.4 1.8 l1.4 -1.4" stroke="#20a040" stroke-width="0.6" fill="none"/>
<path d="M109.6 510.8 l-1.8 2.2 l1.8 2.2 M112 510.8 l-1.8 2.2 l1.8 2.2" stroke="#2c4788" stroke-width="0.8" fill="none"/>
<rect x="116" y="508.4" width="638" height="9" fill="#6a9cfb" stroke="#5586e8" stroke-width="0.5"/>
<rect x="116" y="508.4" width="9.6" height="9" rx="1" fill="#8cb2f6" stroke="#4f80e2" stroke-width="0.5"/><path d="M121.8 510.8 l-2.4 2.1 l2.4 2.1z" fill="#111"/>
<rect x="507.6" y="508.6" width="236" height="8.6" fill="url(#th)" stroke="#4f80e2" stroke-width="0.5"/>
<rect x="743.6" y="508.4" width="9.6" height="9" rx="1" fill="#8cb2f6" stroke="#4f80e2" stroke-width="0.5"/><path d="M746.8 510.8 l2.4 2.1 l-2.4 2.1z" fill="#111"/>
<rect x="759.4" y="509" width="9" height="8" fill="#f4f6fa" stroke="#6a88c0" stroke-width="0.4"/><rect x="759.4" y="509" width="9" height="2.4" fill="#3a78c8"/><path d="M761 507.8 v2.2 M763.8 507.8 v2.2 M766.6 507.8 v2.2" stroke="#e03030" stroke-width="0.8"/><rect x="765" y="513" width="2.4" height="2.4" fill="#e8a0a0"/><path d="M756.6 515 l4.4 -3.4 v2 h4 v2.8 h-4 v2z" fill="#2cb040"/>
<path d="M779 517.4 q5.2 -1 3.6 -5.2 q-1 -1.6 -4 -0.8" stroke="#4a7ef0" stroke-width="1.5" fill="none"/><path d="M776 512.6 l3.6 -2.6 l0.4 4.2z" fill="#4a7ef0"/>
<path d="M796 517.4 q-5.2 -1 -3.6 -5.2 q1 -1.6 4 -0.8" stroke="#4a7ef0" stroke-width="1.5" fill="none"/><path d="M799 512.6 l-3.6 -2.6 l-0.4 4.2z" fill="#4a7ef0"/>
<path d="M809 509.4 l3 -1.2 l3.6 1 l0.6 4 l-1 4.6 l-5 0.4 l-1.6 -3z" fill="#2cb83e"/><path d="M806.4 517.6 l3.6 -3.8" stroke="#c82020" stroke-width="1.8"/><path d="M808.8 514.8 l4.6 -4.2" stroke="#f2f2f2" stroke-width="1.6"/><circle cx="807.6" cy="516" r="1.4" fill="#d83030"/>
<circle cx="823.6" cy="512.2" r="3" fill="#88a8ea" stroke="#5078d0" stroke-width="0.8"/><path d="M825.8 514.6 l2.8 3" stroke="#5078d0" stroke-width="1.2"/><path d="M829.6 509.4 v7" stroke="#3a5fe0" stroke-width="0.6" stroke-dasharray="1 1"/>
<circle cx="840" cy="511.8" r="3" fill="#f4f6fa" stroke="#111" stroke-width="0.9"/><path d="M838.4 511.8 h3.2" stroke="#1a3be0" stroke-width="1"/><path d="M842.2 514.2 l3.4 3.4" stroke="#111" stroke-width="1.5"/>
<circle cx="855.6" cy="511.8" r="3" fill="#f4f6fa" stroke="#111" stroke-width="0.9"/><circle cx="855.6" cy="511.8" r="1.4" fill="#1a3be0"/><path d="M857.8 514.2 l3.4 3.4" stroke="#111" stroke-width="1.5"/>
<rect x="868.4" y="509.2" width="10" height="2.6" fill="#3a3f4c"/><path d="M870 509.6v1.6M872.2 509.6v1.6M874.4 509.6v1.6M876.6 509.6v1.6" stroke="#c8d0e0" stroke-width="0.7"/><path d="M873.4 512.6 v3.4" stroke="#1a50d0" stroke-width="1.1"/><path d="M871.4 515.2 l2 2.4 l2 -2.4z" fill="#1a50d0"/>
<rect x="0" y="521" width="880" height="29" fill="url(#tb)"/>
<path d="M14 540.4 a2.8 2.8 0 0 1 0.4 -5.5 a4 4 0 0 1 7.6 -0.6 a3.1 3.1 0 0 1 1.2 6.1z" fill="#c4d8f2" stroke="#9dbbe8" stroke-width="0.5"/>
<text x="30.6" y="533.2" font-size="6.7" fill="#222">13°C</text><text x="30.6" y="543" font-size="7.2" fill="#777">Nublado</text>
<rect x="246.6" y="529.4" width="6.4" height="6.4" fill="#27a4ea"/>
<rect x="253.6" y="529.4" width="6.4" height="6.4" fill="#27a4ea"/>
<rect x="246.6" y="536.4" width="6.4" height="6.4" fill="#27a4ea"/>
<rect x="253.6" y="536.4" width="6.4" height="6.4" fill="#27a4ea"/>
<rect x="269.6" y="527.2" width="130.6" height="17.2" rx="8.6" fill="#fbf7f6" stroke="#e6dcda" stroke-width="0.5"/>
<circle cx="279.2" cy="535.4" r="2.8" fill="none" stroke="#222" stroke-width="0.9"/><path d="M281.2 537.6 l2.2 2.4" stroke="#222" stroke-width="0.9"/>
<text x="291.2" y="538.6" font-size="8" fill="#555">Procurar</text>
<rect x="411.8" y="528.6" width="11.6" height="10.4" rx="1" fill="#f6f6f6"/><rect x="408.2" y="532.6" width="10.8" height="10" rx="0.8" fill="#262626"/><rect x="411.8" y="532.6" width="7.2" height="6.4" fill="#cfcfcf"/>
<rect x="435" y="531" width="13.6" height="12" rx="2" fill="#1c5cb8"/><path d="M438.6 531 v-1.6 h6.4 v1.6" stroke="#1c5cb8" stroke-width="1" fill="none"/><rect x="438.8" y="534" width="2.8" height="2.8" fill="#f04030"/><rect x="442" y="534" width="2.8" height="2.8" fill="#80c030"/><rect x="438.8" y="537.2" width="2.8" height="2.8" fill="#30a0f0"/><rect x="442" y="537.2" width="2.8" height="2.8" fill="#f8c020"/>
<rect x="463.4" y="530.4" width="7" height="7" fill="none" stroke="#c83030" stroke-width="0.9" stroke-dasharray="1.4 1"/><path d="M468 534 l7 5 M468 541 l7 -5" stroke="#58a8e8" stroke-width="1"/><circle cx="468.6" cy="541.6" r="1.4" fill="none" stroke="#58a8e8" stroke-width="0.8"/>
<path d="M488 531 h5 l1.4 1.6 h7.8 v10 h-14.2z" fill="#f6c030"/><rect x="488" y="534" width="14.2" height="8.6" rx="0.6" fill="#fbd34c"/><rect x="491.4" y="538.4" width="7.4" height="3" rx="0.8" fill="#2a7ce0"/>
<circle cx="521" cy="536.6" r="6.4" fill="#e8b020"/><path d="M521 536.6 L515.4 533.4 A6.4 6.4 0 0 1 526.6 533.4z" fill="#e04030"/><path d="M521 536.6 L515.4 533.4 A6.4 6.4 0 0 0 521 543z" fill="#30a050"/><circle cx="521" cy="536.6" r="2.8" fill="#4080f0" stroke="#fff" stroke-width="0.8"/><circle cx="527.2" cy="530.4" r="4.2" fill="#2a70d8"/><text x="525.3" y="532.4" font-size="5.2" fill="#fff">R</text>
<rect x="540.8" y="529.4" width="14.4" height="14.4" fill="#e85a28"/><path d="M545 541v-3M548 541v-6M551 541v-4M553.4 536v-3" stroke="#fff" stroke-width="1.1"/>
<rect x="569" y="530.4" width="12.4" height="12.4" rx="1.6" fill="#0a0a0e"/><path d="M572.6 540v-3M575.2 539v-4M577.8 537.6v-4" stroke="#4aa3d8" stroke-width="1.1"/>
<rect x="597" y="529.4" width="9" height="13.4" rx="1" fill="#30b050"/><rect x="601" y="535" width="5" height="7.8" fill="#1c7a3a"/><rect x="593.6" y="534.6" width="7" height="7" rx="0.8" fill="#187038"/><text x="595.2" y="540.4" font-size="5" class="b" fill="#fff">x</text>
<rect x="622.4" y="529" width="10" height="14" rx="1" fill="#6a7884"/><rect x="623.6" y="530.4" width="7.6" height="3" fill="#9adcf4"/><g fill="#e8eef2"><rect x="623.6" y="534.6" width="2" height="2"/><rect x="626.4" y="534.6" width="2" height="2"/><rect x="629.2" y="534.6" width="2" height="2"/><rect x="623.6" y="537.4" width="2" height="2"/><rect x="626.4" y="537.4" width="2" height="2"/><rect x="629.2" y="537.4" width="2" height="2"/><rect x="623.6" y="540.2" width="2" height="2"/><rect x="626.4" y="540.2" width="2" height="2"/></g>
<rect x="519.5" y="546" width="3" height="0.9" rx="0.4" fill="#8a8a8a"/>
<rect x="546.5" y="546" width="3" height="0.9" rx="0.4" fill="#8a8a8a"/>
<rect x="573.7" y="546" width="3" height="0.9" rx="0.4" fill="#8a8a8a"/>
<rect x="600.1" y="546" width="3" height="0.9" rx="0.4" fill="#8a8a8a"/>
<rect x="625.9" y="546" width="3" height="0.9" rx="0.4" fill="#8a8a8a"/>
<path d="M701.6 538.2 l2.8 -2.8 l2.8 2.8" stroke="#222" stroke-width="0.9" fill="none"/>
<path d="M720.4 539.6 a2 2 0 0 1 0.3 -3.9 a2.9 2.9 0 0 1 5.5 -0.4 a2.2 2.2 0 0 1 0.8 4.3z" fill="#c8c8c8" stroke="#333" stroke-width="0.6"/>
<path d="M738.6 535 a3.6 3.6 0 0 1 6.4 -1.6 M745.4 531.4 v2.4 h-2.4 M745.6 537.6 a3.6 3.6 0 0 1 -6.4 1.6" stroke="#333" stroke-width="0.7" fill="none"/><circle cx="744.8" cy="539.4" r="2" fill="#1a6ce0"/>
<text x="758.6" y="538.8" font-size="6.6" fill="#222">POR</text>
<g stroke="#222" stroke-width="0.8" fill="none"><path d="M784.4 534.6 a5.6 5.6 0 0 1 8 0"/><path d="M785.8 536.4 a3.6 3.6 0 0 1 5.2 0"/></g><circle cx="788.4" cy="538.6" r="0.9" fill="#222"/>
<path d="M798.4 534.6 h1.6 l2.2 -2 v6.8 l-2.2 -2 h-1.6z" fill="none" stroke="#222" stroke-width="0.7"/><path d="M803.6 534 q1.2 1.8 0 3.6 M805.2 532.8 q2 3 0 6" stroke="#222" stroke-width="0.6" fill="none"/>
<rect x="813.6" y="533.4" width="7.6" height="5" rx="0.8" fill="#222"/><rect x="821.4" y="534.8" width="1" height="2.2" fill="#222"/><path d="M814.6 531.6 v2 M816.6 531 v2.6" stroke="#222" stroke-width="0.7"/>
<text x="869" y="533.4" font-size="7.3" fill="#222" text-anchor="end">11:09</text><text x="869" y="543.4" font-size="7.3" fill="#222" text-anchor="end">23/12/2025</text></svg>
</body></html>
